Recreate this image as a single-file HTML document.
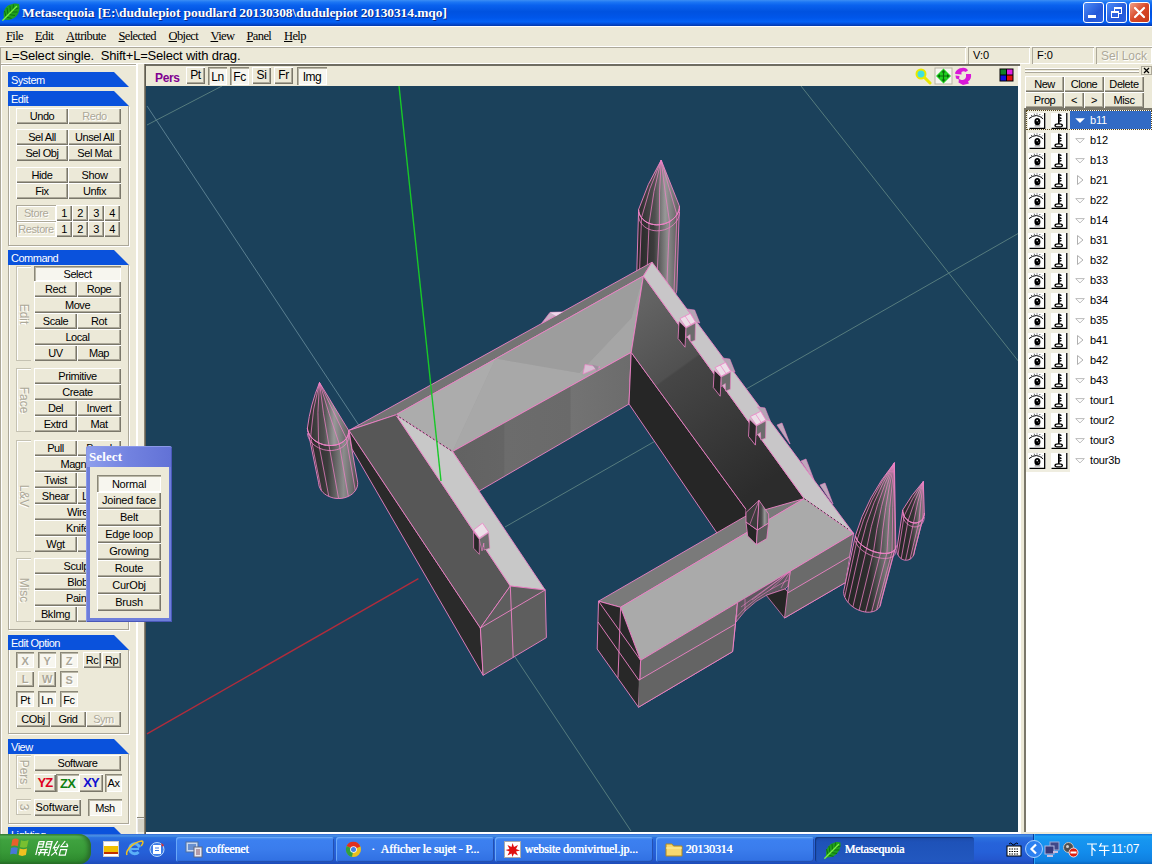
<!DOCTYPE html>
<html><head><meta charset="utf-8"><title>Metasequoia</title>
<style>
*{box-sizing:border-box;margin:0;padding:0}
html,body{width:1152px;height:864px;overflow:hidden;background:#ECE9D8;font-family:"Liberation Sans",sans-serif;font-size:11px;color:#000}
.a{position:absolute}
.b{position:absolute;background:#ECE9D8;text-align:center;white-space:nowrap;overflow:hidden;font-size:11px;line-height:16.5px;letter-spacing:-0.42px;
 box-shadow:inset 1px 1px 0 #fff,inset -1px -1px 0 #7a776a,inset -2px -2px 0 #aca899}
.b.p{background:#F7F6EF;box-shadow:inset 1px 1px 0 #8a8778,inset 2px 2px 0 #b9b6a6,inset -1px -1px 0 #fff;line-height:17px}
.b.pd{background:#F7F6EF;box-shadow:inset 1px 1px 0 #8a8778,inset 2px 2px 0 #b9b6a6,inset -1px -1px 0 #fff;color:#aca899;text-shadow:1px 1px 0 #fff;font-weight:bold;line-height:19px}
.b.d{color:#aca899;text-shadow:1px 1px 0 #fff}
.b.f{box-shadow:inset 1px 1px 0 #aca899,inset -1px -1px 0 #fff,inset 2px 2px 0 #fff;color:#aca899;text-shadow:1px 1px 0 #fff}
.hd{position:absolute;left:8px;width:121px;height:15px;background:#0A52DC;color:#fff;font-size:11px;line-height:16px;padding-left:3px;letter-spacing:-0.5px;
 clip-path:polygon(0 0,106px 0,121px 15px,0 15px)}
.gb{position:absolute;left:8px;width:121px;border-left:1px solid #aca899;border-right:1px solid #aca899;border-bottom:1px solid #aca899;box-shadow:1px 1px 0 #fff, inset 1px 0 0 #fff}
.vt{position:absolute;width:15px;color:#aca899;font-size:12px;border:1px solid #c5c2b2;border-right:none;box-shadow:inset 1px 1px 0 #fff;}
.vt span{position:absolute;left:50%;top:50%;transform:translate(-50%,-50%) rotate(90deg);white-space:nowrap;text-shadow:1px 1px 0 #fff}
.m{position:absolute;top:29px;font-family:"Liberation Serif",serif;font-size:12.5px;line-height:14px;letter-spacing:-0.62px}
.m u{text-decoration:underline}
</style></head><body>
<div class="a" style="left:0px;top:0px;width:1152px;height:26px;background:linear-gradient(#3C8EF4 0%,#1C76F4 8%,#0A62EE 20%,#0052E0 45%,#0056EA 68%,#0462F6 84%,#044AD2 93%,#0338A8 100%)"></div>
<div class="a" style="left:0px;top:26px;width:1152px;height:1px;background:#fff"></div>
<svg class="a" style="left:2px;top:3px" width="18" height="18" viewBox="0 0 18 18"><path d="M2.500 16.500C0.500 11 1.500 5 7 2C10.500 0.500 14 0 17 1C18 5 17.500 10 14 13.500C11 16.500 6 17.500 2.500 16.500Z" fill="#1FA01F"/><g stroke="#0C6C0C" stroke-width="0.900" fill="none"><path d="M4 13.500L2.500 8M6 11.500L5 5M8.500 9L8 3M11 6.500L11.500 1.500M4.500 14L9.500 15.500M7 11.500L13 12.500M9.500 9L15.500 9M12 6.500L16.500 5"/></g><path d="M0.800 17.200L14.500 3.500" stroke="#7CF040" stroke-width="1.300" stroke-linecap="round"/></svg>
<div class="a" style="left:22px;top:4px;width:600px;height:17px;color:#fff;font-family:'Liberation Serif',serif;font-weight:bold;font-size:13.5px;line-height:17px;white-space:nowrap;text-shadow:1px 1px 0 #0A2A8A;letter-spacing:-0.1px">Metasequoia [E:\dudulepiot poudlard 20130308\dudulepiot 20130314.mqo]</div>
<div class="a" style="left:1083px;top:2px;width:21px;height:21px;border-radius:3px;border:1px solid #fff;background:linear-gradient(135deg,#4C8CF8,#2458D8 60%,#2A60E0)"><div class="a" style="left:4px;top:12px;width:8px;height:3px;background:#fff"></div></div>
<div class="a" style="left:1106px;top:2px;width:21px;height:21px;border-radius:3px;border:1px solid #fff;background:linear-gradient(135deg,#4C8CF8,#2458D8 60%,#2A60E0)"><div class="a" style="left:7px;top:4px;width:8px;height:7px;border:1px solid #fff;border-top-width:2px"></div><div class="a" style="left:4px;top:8px;width:8px;height:7px;border:1px solid #fff;border-top-width:2px;background:#2C62E0"></div></div>
<div class="a" style="left:1129px;top:2px;width:21px;height:21px;border-radius:3px;border:1px solid #fff;background:linear-gradient(135deg,#F0A088,#D84828 50%,#C83818)"><svg class="a" style="left:0;top:0" width="19" height="19"><path d="M5 5L14 14M14 5L5 14" stroke="#fff" stroke-width="2.2" stroke-linecap="round"/></svg></div>
<div class="m" style="left:6px"><u>F</u>ile</div>
<div class="m" style="left:35px"><u>E</u>dit</div>
<div class="m" style="left:66px"><u>A</u>ttribute</div>
<div class="m" style="left:118.5px"><u>S</u>elected</div>
<div class="m" style="left:168.5px"><u>O</u>bject</div>
<div class="m" style="left:210.5px"><u>V</u>iew</div>
<div class="m" style="left:246.5px"><u>P</u>anel</div>
<div class="m" style="left:284px"><u>H</u>elp</div>
<div class="a" style="left:0px;top:46px;width:1152px;height:1px;background:#fff"></div>
<div class="a" style="left:0px;top:47px;width:966px;height:17px;box-shadow:inset 1px 1px 0 #aca899,inset -1px -1px 0 #fff;font-size:13px;line-height:17px;padding-left:5px;white-space:nowrap;letter-spacing:-0.2px">L=Select single.&nbsp; Shift+L=Select with drag.</div>
<div class="a" style="left:968px;top:47px;width:62px;height:17px;box-shadow:inset 1px 1px 0 #aca899,inset -1px -1px 0 #fff;font-size:11px;line-height:17px;padding-left:5px">V:0</div>
<div class="a" style="left:1032px;top:47px;width:62px;height:17px;box-shadow:inset 1px 1px 0 #aca899,inset -1px -1px 0 #fff;font-size:11px;line-height:17px;padding-left:5px">F:0</div>
<div class="a" style="left:1096px;top:47px;width:56px;height:17px;box-shadow:inset 1px 1px 0 #aca899,inset -1px -1px 0 #fff;font-size:12px;line-height:18px;padding-left:5px;color:#aca899;text-shadow:1px 1px 0 #fff;white-space:nowrap">Sel Lock</div>
<div class="a" style="left:0px;top:64px;width:137px;height:770px;box-shadow:inset 1px 1px 0 #aca899, inset 2px 2px 0 #fff"></div>
<div class="a" style="left:136px;top:64px;width:2px;height:770px;background:#fff"></div>
<div class="a" style="left:138px;top:64px;width:6px;height:770px;background:#EEEBDD"></div>
<div class="hd" style="top:72px">System</div>
<div class="hd" style="top:91px">Edit</div>
<div class="gb" style="top:106px;height:140px"></div>
<div class="b " style="left:16px;top:108px;width:52px;height:16px;">Undo</div>
<div class="b d" style="left:68px;top:108px;width:53px;height:16px;">Redo</div>
<div class="b " style="left:16px;top:129px;width:52px;height:16px;">Sel All</div>
<div class="b " style="left:68px;top:129px;width:53px;height:16px;">Unsel All</div>
<div class="b " style="left:16px;top:145px;width:52px;height:16px;">Sel Obj</div>
<div class="b " style="left:68px;top:145px;width:53px;height:16px;">Sel Mat</div>
<div class="b " style="left:16px;top:167px;width:52px;height:16px;">Hide</div>
<div class="b " style="left:68px;top:167px;width:53px;height:16px;">Show</div>
<div class="b " style="left:16px;top:183px;width:52px;height:16px;">Fix</div>
<div class="b " style="left:68px;top:183px;width:53px;height:16px;">Unfix</div>
<div class="b f" style="left:16px;top:205px;width:40px;height:16px;">Store</div>
<div class="b f" style="left:16px;top:221px;width:40px;height:16px;">Restore</div>
<div class="b " style="left:56px;top:205px;width:16px;height:16px;">1</div>
<div class="b " style="left:56px;top:221px;width:16px;height:16px;">1</div>
<div class="b " style="left:72px;top:205px;width:16px;height:16px;">2</div>
<div class="b " style="left:72px;top:221px;width:16px;height:16px;">2</div>
<div class="b " style="left:88px;top:205px;width:16px;height:16px;">3</div>
<div class="b " style="left:88px;top:221px;width:16px;height:16px;">3</div>
<div class="b " style="left:104px;top:205px;width:16px;height:16px;">4</div>
<div class="b " style="left:104px;top:221px;width:16px;height:16px;">4</div>
<div class="hd" style="top:250px">Command</div>
<div class="gb" style="top:265px;height:365px"></div>
<div class="vt" style="left:16px;top:266px;height:95px"><span>Edit</span></div>
<div class="b p" style="left:34px;top:266px;width:87px;height:15px;line-height:17px">Select</div>
<div class="b " style="left:34px;top:281px;width:43px;height:16px;">Rect</div>
<div class="b " style="left:77px;top:281px;width:44px;height:16px;">Rope</div>
<div class="b " style="left:34px;top:297px;width:87px;height:16px;">Move</div>
<div class="b " style="left:34px;top:313px;width:43px;height:16px;">Scale</div>
<div class="b " style="left:77px;top:313px;width:44px;height:16px;">Rot</div>
<div class="b " style="left:34px;top:329px;width:87px;height:16px;">Local</div>
<div class="b " style="left:34px;top:345px;width:43px;height:16px;">UV</div>
<div class="b " style="left:77px;top:345px;width:44px;height:16px;">Map</div>
<div class="vt" style="left:16px;top:368px;height:64px"><span>Face</span></div>
<div class="b " style="left:34px;top:368px;width:87px;height:16px;">Primitive</div>
<div class="b " style="left:34px;top:384px;width:87px;height:16px;">Create</div>
<div class="b " style="left:34px;top:400px;width:43px;height:16px;">Del</div>
<div class="b " style="left:77px;top:400px;width:44px;height:16px;">Invert</div>
<div class="b " style="left:34px;top:416px;width:43px;height:16px;">Extrd</div>
<div class="b " style="left:77px;top:416px;width:44px;height:16px;">Mat</div>
<div class="vt" style="left:16px;top:440px;height:112px"><span>L&amp;V</span></div>
<div class="b " style="left:34px;top:440px;width:43px;height:16px;">Pull</div>
<div class="b " style="left:77px;top:440px;width:44px;height:16px;">Bevel</div>
<div class="b " style="left:34px;top:456px;width:87px;height:16px;">Magnet</div>
<div class="b " style="left:34px;top:472px;width:43px;height:16px;">Twist</div>
<div class="b " style="left:77px;top:472px;width:44px;height:16px;"></div>
<div class="b " style="left:34px;top:488px;width:43px;height:16px;">Shear</div>
<div class="b " style="left:77px;top:488px;width:44px;height:16px;text-align:left;padding-left:5px">Lathe</div>
<div class="b " style="left:34px;top:504px;width:87px;height:16px;">Wire</div>
<div class="b " style="left:34px;top:520px;width:87px;height:16px;">Knife</div>
<div class="b " style="left:34px;top:536px;width:43px;height:16px;">Wgt</div>
<div class="b " style="left:77px;top:536px;width:44px;height:16px;"></div>
<div class="vt" style="left:16px;top:558px;height:64px"><span>Misc</span></div>
<div class="b " style="left:34px;top:558px;width:87px;height:16px;">Sculpt</div>
<div class="b " style="left:34px;top:574px;width:87px;height:16px;">Blob</div>
<div class="b " style="left:34px;top:590px;width:87px;height:16px;">Paint</div>
<div class="b " style="left:34px;top:606px;width:43px;height:16px;">BkImg</div>
<div class="b " style="left:77px;top:606px;width:44px;height:16px;"></div>
<div class="hd" style="top:635px">Edit Option</div>
<div class="gb" style="top:650px;height:84px"></div>
<div class="b pd" style="left:16px;top:652px;width:18px;height:16px;">X</div>
<div class="b pd" style="left:38px;top:652px;width:18px;height:16px;">Y</div>
<div class="b pd" style="left:60px;top:652px;width:18px;height:16px;">Z</div>
<div class="b " style="left:83px;top:652px;width:18px;height:16px;">Rc</div>
<div class="b " style="left:102px;top:652px;width:19px;height:16px;">Rp</div>
<div class="b d" style="left:16px;top:671px;width:18px;height:16px;font-weight:bold">L</div>
<div class="b d" style="left:38px;top:671px;width:18px;height:16px;font-weight:bold">W</div>
<div class="b pd" style="left:60px;top:671px;width:18px;height:16px;">S</div>
<div class="b p" style="left:16px;top:691px;width:18px;height:16px;line-height:19px">Pt</div>
<div class="b p" style="left:38px;top:691px;width:18px;height:16px;line-height:19px">Ln</div>
<div class="b p" style="left:60px;top:691px;width:18px;height:16px;line-height:19px">Fc</div>
<div class="b " style="left:16px;top:711px;width:34px;height:16px;">CObj</div>
<div class="b " style="left:50px;top:711px;width:36px;height:16px;">Grid</div>
<div class="b d" style="left:86px;top:711px;width:35px;height:16px;">Sym</div>
<div class="hd" style="top:739px">View</div>
<div class="gb" style="top:754px;height:70px"></div>
<div class="vt" style="left:16px;top:755px;height:34px"><span>Pers</span></div>
<div class="b " style="left:34px;top:755px;width:87px;height:16px;">Software</div>
<div class="b " style="left:34px;top:774px;width:22px;height:18px;color:#E00020;font-weight:bold;font-size:13px;line-height:17px;letter-spacing:-0.9px">YZ</div>
<div class="b p" style="left:56px;top:774px;width:23px;height:18px;color:#108010;font-weight:bold;font-size:13px;line-height:20px;letter-spacing:-0.9px">ZX</div>
<div class="b " style="left:79px;top:774px;width:24px;height:18px;color:#1010D0;font-weight:bold;font-size:13px;line-height:17px;letter-spacing:-0.9px">XY</div>
<div class="b p" style="left:105px;top:774px;width:17px;height:18px;line-height:19px">Ax</div>
<div class="vt" style="left:16px;top:799px;height:16px"><span>3</span></div>
<div class="b " style="left:34px;top:799px;width:47px;height:17px;line-height:16px;letter-spacing:-0.05px;text-indent:-1px">Software</div>
<div class="b p" style="left:88px;top:799px;width:34px;height:17px;line-height:19px">Msh</div>
<div class="hd" style="top:827px">Lighting</div>
<div class="a" style="left:137px;top:817px;width:9px;height:15px;background:#D6D3C6;box-shadow:inset 0 1px 0 #8a8778,inset 1px 2px 0 #eee"></div>
<div class="a" style="left:144px;top:64px;width:1px;height:770px;background:#8a8474"></div>
<div class="a" style="left:145px;top:64px;width:1px;height:770px;background:#5e5c52"></div>
<div class="a" style="left:146px;top:64px;width:874px;height:2px;background:#6f6d62"></div>
<div class="a" style="left:146px;top:66px;width:872px;height:20px;background:#ECE9D8"></div>
<div class="a" style="left:1018px;top:66px;width:3px;height:768px;background:#fff"></div>
<div class="a" style="left:146px;top:832px;width:1006px;height:2px;background:#fff"></div>
<div class="a" style="left:155px;top:70.5px;width:30px;height:14px;color:#800090;font-weight:bold;font-size:12px;line-height:15px;letter-spacing:-0.35px">Pers</div>
<div class="b " style="left:186px;top:67px;width:19px;height:17px;font-size:12px;line-height:17.500px">Pt</div>
<div class="b p" style="left:208px;top:67px;width:19px;height:18px;font-size:12px;line-height:21.500px">Ln</div>
<div class="b p" style="left:230px;top:67px;width:19px;height:18px;font-size:12px;line-height:21.500px">Fc</div>
<div class="b " style="left:252px;top:67px;width:19px;height:17px;font-size:12px;line-height:17.500px">Si</div>
<div class="b " style="left:274px;top:67px;width:19px;height:17px;font-size:12px;line-height:17.500px">Fr</div>
<div class="b p" style="left:297px;top:67px;width:30px;height:18px;font-size:12px;line-height:21.500px">Img</div>
<svg class="a" style="left:914px;top:67px" width="104" height="18" viewBox="0 0 104 18">
<circle cx="7" cy="7" r="4.5" fill="#40E0E0" stroke="#E8E800" stroke-width="2"/><path d="M10.5 10.5L16 16" stroke="#E8E800" stroke-width="3" stroke-linecap="round"/>
<rect x="21" y="1" width="17" height="16" fill="#F7F6EF" stroke="#b9b6a6" stroke-width="1"/>
<path d="M29.5 1.5L37 9L29.5 16.5L22 9Z" fill="#20D020"/><path d="M29.5 4v10M24.5 9h10" stroke="#0A6A0A" stroke-width="1.2"/><path d="M29.5 3l-2 2.5h4zM29.5 15l-2-2.5h4zM23.5 9l2.5-2v4zM35.5 9l-2.5-2v4z" fill="#0A6A0A"/>
<g transform="translate(49,9.500)"><path d="M-1 -8.500C2 -9 4 -8 5 -6L2.500 -4.500C1.500 -5.500 0 -5.500 -1.500 -4.500L-1.500 -2L-7.500 -2.500L-8 -3.500C-7 -6.500 -4 -8.500 -1 -8.500Z" fill="#D818D8"/><path d="M3 -2.500L8 -2.500C8.500 1 7.500 3.500 5 5L6 7L0 8.500L-4.500 6L-4 2.500L-1.500 3.500C0.500 4 2.500 2.500 3 0.500Z" fill="#D818D8"/><path d="M-7.500 -1L-3.500 -0.500L-4 3L-7 2Z" fill="#D818D8"/></g>
<rect x="85.500" y="1.500" width="14" height="13" fill="#000"/><rect x="86.500" y="2.500" width="5.500" height="5" fill="#108028"/><rect x="93" y="2.500" width="5.500" height="5" fill="#E020E0"/><rect x="86.500" y="8.500" width="5.500" height="5" fill="#1010E0"/><rect x="93" y="8.500" width="5.500" height="5" fill="#E01010"/>
</svg>
<div class="a" style="left:1021px;top:64px;width:131px;height:770px;background:#ECE9D8"></div>
<div class="a" style="left:1025px;top:68px;width:114px;height:1px;background:#fff"></div>
<div class="a" style="left:1025px;top:69px;width:114px;height:1px;background:#aca899"></div>
<div class="a" style="left:1025px;top:71px;width:114px;height:1px;background:#fff"></div>
<div class="a" style="left:1025px;top:72px;width:114px;height:1px;background:#aca899"></div>
<svg class="a" style="left:1141px;top:66px" width="11" height="9"><rect x="0.5" y="0.5" width="10" height="8" fill="#ECE9D8" stroke="#aca899"/><path d="M3 2L8 7M8 2L3 7" stroke="#000" stroke-width="1.2"/></svg>
<div class="b " style="left:1025px;top:76px;width:39px;height:16px;font-size:11px;line-height:17px">New</div>
<div class="b " style="left:1064px;top:76px;width:40px;height:16px;font-size:11px;line-height:17px">Clone</div>
<div class="b " style="left:1104px;top:76px;width:40px;height:16px;font-size:11px;line-height:17px">Delete</div>
<div class="b " style="left:1025px;top:92px;width:39px;height:16px;font-size:11px;line-height:17px">Prop</div>
<div class="b " style="left:1064px;top:92px;width:20px;height:16px;font-size:11px;line-height:17px">&lt;</div>
<div class="b " style="left:1084px;top:92px;width:20px;height:16px;font-size:11px;line-height:17px">&gt;</div>
<div class="b " style="left:1104px;top:92px;width:40px;height:16px;font-size:11px;line-height:17px">Misc</div>
<div class="a" style="left:1024px;top:108px;width:128px;height:724px;background:#fff;box-shadow:inset 2px 2px 0 #7a776a"></div>
<div class="a" style="left:1026px;top:110px;width:44px;height:362px;background:#EFEDE0"></div>
<div class="a" style="left:1070px;top:111px;width:81px;height:18px;background:#316AC5"></div>
<div class="a" style="left:1026px;top:110px;width:126px;height:20px;border:1px dotted #5a4a20"></div>
<svg class="a" style="left:1027.5px;top:112.6px" width="18" height="16" viewBox="0 0 18 16"><rect x="0" y="0" width="18" height="16" fill="#fff"/><path d="M16.700 0V15.300H1.500" stroke="#000" stroke-width="1.300" fill="none"/><path d="M1 5.600Q8.500 -0.600 15.200 5.900" stroke="#000" stroke-width="1" fill="none"/><path d="M3.800 2.900L3.100 1.900M6.500 1.800L6.200 0.700M9 1.500V0.400M11.600 2L12.100 1M13.800 3.400L14.600 2.600" stroke="#000" stroke-width="0.700"/><ellipse cx="9.400" cy="8.700" rx="3" ry="3.600" fill="#000"/><rect x="8.500" y="6.800" width="1.400" height="1.400" fill="#fff"/><rect x="10.200" y="8.800" width="0.900" height="0.900" fill="#888"/><path d="M6.700 12.900H12.200" stroke="#555" stroke-width="0.800"/></svg>
<svg class="a" style="left:1050.5px;top:112.6px" width="17" height="16" viewBox="0 0 17 16"><rect x="0" y="0" width="17" height="16" fill="#fff"/><path d="M15.800 0V15.300H0.500" stroke="#000" stroke-width="1.300" fill="none"/><path d="M7.800 0.700V11.200" stroke="#000" stroke-width="1.600"/><path d="M8.400 0.800L11.200 2.200L8.400 3.600ZM8.400 3.800L11.200 5.200L8.400 6.600ZM8.400 6.600L11.200 7.800L8.400 9Z" fill="#000"/><ellipse cx="7.700" cy="12.400" rx="3.700" ry="1.500" fill="#fff" stroke="#000" stroke-width="1.300"/></svg>
<svg class="a" style="left:1074.500px;top:118px" width="11" height="7"><path d="M0.300 0.300H9.900L5 4.900Z" fill="#fff"/></svg>
<div class="a" style="left:1090px;top:113px;width:60px;height:14px;color:#fff;font-size:11px;line-height:14px;white-space:nowrap;letter-spacing:-0.15px">b11</div>
<svg class="a" style="left:1027.5px;top:132.6px" width="18" height="16" viewBox="0 0 18 16"><rect x="0" y="0" width="18" height="16" fill="#fff"/><path d="M16.700 0V15.300H1.500" stroke="#000" stroke-width="1.300" fill="none"/><path d="M1 5.600Q8.500 -0.600 15.200 5.900" stroke="#000" stroke-width="1" fill="none"/><path d="M3.800 2.900L3.100 1.900M6.500 1.800L6.200 0.700M9 1.500V0.400M11.600 2L12.100 1M13.800 3.400L14.600 2.600" stroke="#000" stroke-width="0.700"/><ellipse cx="9.400" cy="8.700" rx="3" ry="3.600" fill="#000"/><rect x="8.500" y="6.800" width="1.400" height="1.400" fill="#fff"/><rect x="10.200" y="8.800" width="0.900" height="0.900" fill="#888"/><path d="M6.700 12.900H12.200" stroke="#555" stroke-width="0.800"/></svg>
<svg class="a" style="left:1050.5px;top:132.6px" width="17" height="16" viewBox="0 0 17 16"><rect x="0" y="0" width="17" height="16" fill="#fff"/><path d="M15.800 0V15.300H0.500" stroke="#000" stroke-width="1.300" fill="none"/><path d="M7.800 0.700V11.200" stroke="#000" stroke-width="1.600"/><path d="M8.400 0.800L11.200 2.200L8.400 3.600ZM8.400 3.800L11.200 5.200L8.400 6.600ZM8.400 6.600L11.200 7.800L8.400 9Z" fill="#000"/><ellipse cx="7.700" cy="12.400" rx="3.700" ry="1.500" fill="#fff" stroke="#000" stroke-width="1.300"/></svg>
<svg class="a" style="left:1074.500px;top:137.5px" width="11" height="7"><path d="M0.700 0.600H9.300L5 4.900Z" fill="#fff" stroke="#b4b4b4" stroke-width="0.900"/></svg>
<div class="a" style="left:1090px;top:133px;width:60px;height:14px;color:#000;font-size:11px;line-height:14px;white-space:nowrap;letter-spacing:-0.15px">b12</div>
<svg class="a" style="left:1027.5px;top:152.6px" width="18" height="16" viewBox="0 0 18 16"><rect x="0" y="0" width="18" height="16" fill="#fff"/><path d="M16.700 0V15.300H1.500" stroke="#000" stroke-width="1.300" fill="none"/><path d="M1 5.600Q8.500 -0.600 15.200 5.900" stroke="#000" stroke-width="1" fill="none"/><path d="M3.800 2.900L3.100 1.900M6.500 1.800L6.200 0.700M9 1.500V0.400M11.600 2L12.100 1M13.800 3.400L14.600 2.600" stroke="#000" stroke-width="0.700"/><ellipse cx="9.400" cy="8.700" rx="3" ry="3.600" fill="#000"/><rect x="8.500" y="6.800" width="1.400" height="1.400" fill="#fff"/><rect x="10.200" y="8.800" width="0.900" height="0.900" fill="#888"/><path d="M6.700 12.900H12.200" stroke="#555" stroke-width="0.800"/></svg>
<svg class="a" style="left:1050.5px;top:152.6px" width="17" height="16" viewBox="0 0 17 16"><rect x="0" y="0" width="17" height="16" fill="#fff"/><path d="M15.800 0V15.300H0.500" stroke="#000" stroke-width="1.300" fill="none"/><path d="M7.800 0.700V11.200" stroke="#000" stroke-width="1.600"/><path d="M8.400 0.800L11.200 2.200L8.400 3.600ZM8.400 3.800L11.200 5.200L8.400 6.600ZM8.400 6.600L11.200 7.800L8.400 9Z" fill="#000"/><ellipse cx="7.700" cy="12.400" rx="3.700" ry="1.500" fill="#fff" stroke="#000" stroke-width="1.300"/></svg>
<svg class="a" style="left:1074.500px;top:157.5px" width="11" height="7"><path d="M0.700 0.600H9.300L5 4.900Z" fill="#fff" stroke="#b4b4b4" stroke-width="0.900"/></svg>
<div class="a" style="left:1090px;top:153px;width:60px;height:14px;color:#000;font-size:11px;line-height:14px;white-space:nowrap;letter-spacing:-0.15px">b13</div>
<svg class="a" style="left:1027.5px;top:172.6px" width="18" height="16" viewBox="0 0 18 16"><rect x="0" y="0" width="18" height="16" fill="#fff"/><path d="M16.700 0V15.300H1.500" stroke="#000" stroke-width="1.300" fill="none"/><path d="M1 5.600Q8.500 -0.600 15.200 5.900" stroke="#000" stroke-width="1" fill="none"/><path d="M3.800 2.900L3.100 1.900M6.500 1.800L6.200 0.700M9 1.500V0.400M11.600 2L12.100 1M13.800 3.400L14.600 2.600" stroke="#000" stroke-width="0.700"/><ellipse cx="9.400" cy="8.700" rx="3" ry="3.600" fill="#000"/><rect x="8.500" y="6.800" width="1.400" height="1.400" fill="#fff"/><rect x="10.200" y="8.800" width="0.900" height="0.900" fill="#888"/><path d="M6.700 12.900H12.200" stroke="#555" stroke-width="0.800"/></svg>
<svg class="a" style="left:1050.5px;top:172.6px" width="17" height="16" viewBox="0 0 17 16"><rect x="0" y="0" width="17" height="16" fill="#fff"/><path d="M15.800 0V15.300H0.500" stroke="#000" stroke-width="1.300" fill="none"/><path d="M7.800 0.700V11.200" stroke="#000" stroke-width="1.600"/><path d="M8.400 0.800L11.200 2.200L8.400 3.600ZM8.400 3.800L11.200 5.200L8.400 6.600ZM8.400 6.600L11.200 7.800L8.400 9Z" fill="#000"/><ellipse cx="7.700" cy="12.400" rx="3.700" ry="1.500" fill="#fff" stroke="#000" stroke-width="1.300"/></svg>
<svg class="a" style="left:1077px;top:175px" width="7" height="10"><path d="M0.500 0.500V9.500L6 5Z" fill="#fff" stroke="#b0b0b0"/></svg>
<div class="a" style="left:1090px;top:173px;width:60px;height:14px;color:#000;font-size:11px;line-height:14px;white-space:nowrap;letter-spacing:-0.15px">b21</div>
<svg class="a" style="left:1027.5px;top:192.6px" width="18" height="16" viewBox="0 0 18 16"><rect x="0" y="0" width="18" height="16" fill="#fff"/><path d="M16.700 0V15.300H1.500" stroke="#000" stroke-width="1.300" fill="none"/><path d="M1 5.600Q8.500 -0.600 15.200 5.900" stroke="#000" stroke-width="1" fill="none"/><path d="M3.800 2.900L3.100 1.900M6.500 1.800L6.200 0.700M9 1.500V0.400M11.600 2L12.100 1M13.800 3.400L14.600 2.600" stroke="#000" stroke-width="0.700"/><ellipse cx="9.400" cy="8.700" rx="3" ry="3.600" fill="#000"/><rect x="8.500" y="6.800" width="1.400" height="1.400" fill="#fff"/><rect x="10.200" y="8.800" width="0.900" height="0.900" fill="#888"/><path d="M6.700 12.900H12.200" stroke="#555" stroke-width="0.800"/></svg>
<svg class="a" style="left:1050.5px;top:192.6px" width="17" height="16" viewBox="0 0 17 16"><rect x="0" y="0" width="17" height="16" fill="#fff"/><path d="M15.800 0V15.300H0.500" stroke="#000" stroke-width="1.300" fill="none"/><path d="M7.800 0.700V11.200" stroke="#000" stroke-width="1.600"/><path d="M8.400 0.800L11.200 2.200L8.400 3.600ZM8.400 3.800L11.200 5.200L8.400 6.600ZM8.400 6.600L11.200 7.800L8.400 9Z" fill="#000"/><ellipse cx="7.700" cy="12.400" rx="3.700" ry="1.500" fill="#fff" stroke="#000" stroke-width="1.300"/></svg>
<svg class="a" style="left:1074.500px;top:197.5px" width="11" height="7"><path d="M0.700 0.600H9.300L5 4.900Z" fill="#fff" stroke="#b4b4b4" stroke-width="0.900"/></svg>
<div class="a" style="left:1090px;top:193px;width:60px;height:14px;color:#000;font-size:11px;line-height:14px;white-space:nowrap;letter-spacing:-0.15px">b22</div>
<svg class="a" style="left:1027.5px;top:212.6px" width="18" height="16" viewBox="0 0 18 16"><rect x="0" y="0" width="18" height="16" fill="#fff"/><path d="M16.700 0V15.300H1.500" stroke="#000" stroke-width="1.300" fill="none"/><path d="M1 5.600Q8.500 -0.600 15.200 5.900" stroke="#000" stroke-width="1" fill="none"/><path d="M3.800 2.900L3.100 1.900M6.500 1.800L6.200 0.700M9 1.500V0.400M11.600 2L12.100 1M13.800 3.400L14.600 2.600" stroke="#000" stroke-width="0.700"/><ellipse cx="9.400" cy="8.700" rx="3" ry="3.600" fill="#000"/><rect x="8.500" y="6.800" width="1.400" height="1.400" fill="#fff"/><rect x="10.200" y="8.800" width="0.900" height="0.900" fill="#888"/><path d="M6.700 12.900H12.200" stroke="#555" stroke-width="0.800"/></svg>
<svg class="a" style="left:1050.5px;top:212.6px" width="17" height="16" viewBox="0 0 17 16"><rect x="0" y="0" width="17" height="16" fill="#fff"/><path d="M15.800 0V15.300H0.500" stroke="#000" stroke-width="1.300" fill="none"/><path d="M7.800 0.700V11.200" stroke="#000" stroke-width="1.600"/><path d="M8.400 0.800L11.200 2.200L8.400 3.600ZM8.400 3.800L11.200 5.200L8.400 6.600ZM8.400 6.600L11.200 7.800L8.400 9Z" fill="#000"/><ellipse cx="7.700" cy="12.400" rx="3.700" ry="1.500" fill="#fff" stroke="#000" stroke-width="1.300"/></svg>
<svg class="a" style="left:1074.500px;top:217.5px" width="11" height="7"><path d="M0.700 0.600H9.300L5 4.900Z" fill="#fff" stroke="#b4b4b4" stroke-width="0.900"/></svg>
<div class="a" style="left:1090px;top:213px;width:60px;height:14px;color:#000;font-size:11px;line-height:14px;white-space:nowrap;letter-spacing:-0.15px">b14</div>
<svg class="a" style="left:1027.5px;top:232.6px" width="18" height="16" viewBox="0 0 18 16"><rect x="0" y="0" width="18" height="16" fill="#fff"/><path d="M16.700 0V15.300H1.500" stroke="#000" stroke-width="1.300" fill="none"/><path d="M1 5.600Q8.500 -0.600 15.200 5.900" stroke="#000" stroke-width="1" fill="none"/><path d="M3.800 2.900L3.100 1.900M6.500 1.800L6.200 0.700M9 1.500V0.400M11.600 2L12.100 1M13.800 3.400L14.600 2.600" stroke="#000" stroke-width="0.700"/><ellipse cx="9.400" cy="8.700" rx="3" ry="3.600" fill="#000"/><rect x="8.500" y="6.800" width="1.400" height="1.400" fill="#fff"/><rect x="10.200" y="8.800" width="0.900" height="0.900" fill="#888"/><path d="M6.700 12.900H12.200" stroke="#555" stroke-width="0.800"/></svg>
<svg class="a" style="left:1050.5px;top:232.6px" width="17" height="16" viewBox="0 0 17 16"><rect x="0" y="0" width="17" height="16" fill="#fff"/><path d="M15.800 0V15.300H0.500" stroke="#000" stroke-width="1.300" fill="none"/><path d="M7.800 0.700V11.200" stroke="#000" stroke-width="1.600"/><path d="M8.400 0.800L11.200 2.200L8.400 3.600ZM8.400 3.800L11.200 5.200L8.400 6.600ZM8.400 6.600L11.200 7.800L8.400 9Z" fill="#000"/><ellipse cx="7.700" cy="12.400" rx="3.700" ry="1.500" fill="#fff" stroke="#000" stroke-width="1.300"/></svg>
<svg class="a" style="left:1077px;top:235px" width="7" height="10"><path d="M0.500 0.500V9.500L6 5Z" fill="#fff" stroke="#b0b0b0"/></svg>
<div class="a" style="left:1090px;top:233px;width:60px;height:14px;color:#000;font-size:11px;line-height:14px;white-space:nowrap;letter-spacing:-0.15px">b31</div>
<svg class="a" style="left:1027.5px;top:252.6px" width="18" height="16" viewBox="0 0 18 16"><rect x="0" y="0" width="18" height="16" fill="#fff"/><path d="M16.700 0V15.300H1.500" stroke="#000" stroke-width="1.300" fill="none"/><path d="M1 5.600Q8.500 -0.600 15.200 5.900" stroke="#000" stroke-width="1" fill="none"/><path d="M3.800 2.900L3.100 1.900M6.500 1.800L6.200 0.700M9 1.500V0.400M11.600 2L12.100 1M13.800 3.400L14.600 2.600" stroke="#000" stroke-width="0.700"/><ellipse cx="9.400" cy="8.700" rx="3" ry="3.600" fill="#000"/><rect x="8.500" y="6.800" width="1.400" height="1.400" fill="#fff"/><rect x="10.200" y="8.800" width="0.900" height="0.900" fill="#888"/><path d="M6.700 12.900H12.200" stroke="#555" stroke-width="0.800"/></svg>
<svg class="a" style="left:1050.5px;top:252.6px" width="17" height="16" viewBox="0 0 17 16"><rect x="0" y="0" width="17" height="16" fill="#fff"/><path d="M15.800 0V15.300H0.500" stroke="#000" stroke-width="1.300" fill="none"/><path d="M7.800 0.700V11.200" stroke="#000" stroke-width="1.600"/><path d="M8.400 0.800L11.200 2.200L8.400 3.600ZM8.400 3.800L11.200 5.200L8.400 6.600ZM8.400 6.600L11.200 7.800L8.400 9Z" fill="#000"/><ellipse cx="7.700" cy="12.400" rx="3.700" ry="1.500" fill="#fff" stroke="#000" stroke-width="1.300"/></svg>
<svg class="a" style="left:1077px;top:255px" width="7" height="10"><path d="M0.500 0.500V9.500L6 5Z" fill="#fff" stroke="#b0b0b0"/></svg>
<div class="a" style="left:1090px;top:253px;width:60px;height:14px;color:#000;font-size:11px;line-height:14px;white-space:nowrap;letter-spacing:-0.15px">b32</div>
<svg class="a" style="left:1027.5px;top:272.6px" width="18" height="16" viewBox="0 0 18 16"><rect x="0" y="0" width="18" height="16" fill="#fff"/><path d="M16.700 0V15.300H1.500" stroke="#000" stroke-width="1.300" fill="none"/><path d="M1 5.600Q8.500 -0.600 15.200 5.900" stroke="#000" stroke-width="1" fill="none"/><path d="M3.800 2.900L3.100 1.900M6.500 1.800L6.200 0.700M9 1.500V0.400M11.600 2L12.100 1M13.800 3.400L14.600 2.600" stroke="#000" stroke-width="0.700"/><ellipse cx="9.400" cy="8.700" rx="3" ry="3.600" fill="#000"/><rect x="8.500" y="6.800" width="1.400" height="1.400" fill="#fff"/><rect x="10.200" y="8.800" width="0.900" height="0.900" fill="#888"/><path d="M6.700 12.900H12.200" stroke="#555" stroke-width="0.800"/></svg>
<svg class="a" style="left:1050.5px;top:272.6px" width="17" height="16" viewBox="0 0 17 16"><rect x="0" y="0" width="17" height="16" fill="#fff"/><path d="M15.800 0V15.300H0.500" stroke="#000" stroke-width="1.300" fill="none"/><path d="M7.800 0.700V11.200" stroke="#000" stroke-width="1.600"/><path d="M8.400 0.800L11.200 2.200L8.400 3.600ZM8.400 3.800L11.200 5.200L8.400 6.600ZM8.400 6.600L11.200 7.800L8.400 9Z" fill="#000"/><ellipse cx="7.700" cy="12.400" rx="3.700" ry="1.500" fill="#fff" stroke="#000" stroke-width="1.300"/></svg>
<svg class="a" style="left:1074.500px;top:277.5px" width="11" height="7"><path d="M0.700 0.600H9.300L5 4.900Z" fill="#fff" stroke="#b4b4b4" stroke-width="0.900"/></svg>
<div class="a" style="left:1090px;top:273px;width:60px;height:14px;color:#000;font-size:11px;line-height:14px;white-space:nowrap;letter-spacing:-0.15px">b33</div>
<svg class="a" style="left:1027.5px;top:292.6px" width="18" height="16" viewBox="0 0 18 16"><rect x="0" y="0" width="18" height="16" fill="#fff"/><path d="M16.700 0V15.300H1.500" stroke="#000" stroke-width="1.300" fill="none"/><path d="M1 5.600Q8.500 -0.600 15.200 5.900" stroke="#000" stroke-width="1" fill="none"/><path d="M3.800 2.900L3.100 1.900M6.500 1.800L6.200 0.700M9 1.500V0.400M11.600 2L12.100 1M13.800 3.400L14.600 2.600" stroke="#000" stroke-width="0.700"/><ellipse cx="9.400" cy="8.700" rx="3" ry="3.600" fill="#000"/><rect x="8.500" y="6.800" width="1.400" height="1.400" fill="#fff"/><rect x="10.200" y="8.800" width="0.900" height="0.900" fill="#888"/><path d="M6.700 12.900H12.200" stroke="#555" stroke-width="0.800"/></svg>
<svg class="a" style="left:1050.5px;top:292.6px" width="17" height="16" viewBox="0 0 17 16"><rect x="0" y="0" width="17" height="16" fill="#fff"/><path d="M15.800 0V15.300H0.500" stroke="#000" stroke-width="1.300" fill="none"/><path d="M7.800 0.700V11.200" stroke="#000" stroke-width="1.600"/><path d="M8.400 0.800L11.200 2.200L8.400 3.600ZM8.400 3.800L11.200 5.200L8.400 6.600ZM8.400 6.600L11.200 7.800L8.400 9Z" fill="#000"/><ellipse cx="7.700" cy="12.400" rx="3.700" ry="1.500" fill="#fff" stroke="#000" stroke-width="1.300"/></svg>
<svg class="a" style="left:1074.500px;top:297.5px" width="11" height="7"><path d="M0.700 0.600H9.300L5 4.900Z" fill="#fff" stroke="#b4b4b4" stroke-width="0.900"/></svg>
<div class="a" style="left:1090px;top:293px;width:60px;height:14px;color:#000;font-size:11px;line-height:14px;white-space:nowrap;letter-spacing:-0.15px">b34</div>
<svg class="a" style="left:1027.5px;top:312.6px" width="18" height="16" viewBox="0 0 18 16"><rect x="0" y="0" width="18" height="16" fill="#fff"/><path d="M16.700 0V15.300H1.500" stroke="#000" stroke-width="1.300" fill="none"/><path d="M1 5.600Q8.500 -0.600 15.200 5.900" stroke="#000" stroke-width="1" fill="none"/><path d="M3.800 2.900L3.100 1.900M6.500 1.800L6.200 0.700M9 1.500V0.400M11.600 2L12.100 1M13.800 3.400L14.600 2.600" stroke="#000" stroke-width="0.700"/><ellipse cx="9.400" cy="8.700" rx="3" ry="3.600" fill="#000"/><rect x="8.500" y="6.800" width="1.400" height="1.400" fill="#fff"/><rect x="10.200" y="8.800" width="0.900" height="0.900" fill="#888"/><path d="M6.700 12.900H12.200" stroke="#555" stroke-width="0.800"/></svg>
<svg class="a" style="left:1050.5px;top:312.6px" width="17" height="16" viewBox="0 0 17 16"><rect x="0" y="0" width="17" height="16" fill="#fff"/><path d="M15.800 0V15.300H0.500" stroke="#000" stroke-width="1.300" fill="none"/><path d="M7.800 0.700V11.200" stroke="#000" stroke-width="1.600"/><path d="M8.400 0.800L11.200 2.200L8.400 3.600ZM8.400 3.800L11.200 5.200L8.400 6.600ZM8.400 6.600L11.200 7.800L8.400 9Z" fill="#000"/><ellipse cx="7.700" cy="12.400" rx="3.700" ry="1.500" fill="#fff" stroke="#000" stroke-width="1.300"/></svg>
<svg class="a" style="left:1074.500px;top:317.5px" width="11" height="7"><path d="M0.700 0.600H9.300L5 4.900Z" fill="#fff" stroke="#b4b4b4" stroke-width="0.900"/></svg>
<div class="a" style="left:1090px;top:313px;width:60px;height:14px;color:#000;font-size:11px;line-height:14px;white-space:nowrap;letter-spacing:-0.15px">b35</div>
<svg class="a" style="left:1027.5px;top:332.6px" width="18" height="16" viewBox="0 0 18 16"><rect x="0" y="0" width="18" height="16" fill="#fff"/><path d="M16.700 0V15.300H1.500" stroke="#000" stroke-width="1.300" fill="none"/><path d="M1 5.600Q8.500 -0.600 15.200 5.900" stroke="#000" stroke-width="1" fill="none"/><path d="M3.800 2.900L3.100 1.900M6.500 1.800L6.200 0.700M9 1.500V0.400M11.600 2L12.100 1M13.800 3.400L14.600 2.600" stroke="#000" stroke-width="0.700"/><ellipse cx="9.400" cy="8.700" rx="3" ry="3.600" fill="#000"/><rect x="8.500" y="6.800" width="1.400" height="1.400" fill="#fff"/><rect x="10.200" y="8.800" width="0.900" height="0.900" fill="#888"/><path d="M6.700 12.900H12.200" stroke="#555" stroke-width="0.800"/></svg>
<svg class="a" style="left:1050.5px;top:332.6px" width="17" height="16" viewBox="0 0 17 16"><rect x="0" y="0" width="17" height="16" fill="#fff"/><path d="M15.800 0V15.300H0.500" stroke="#000" stroke-width="1.300" fill="none"/><path d="M7.800 0.700V11.200" stroke="#000" stroke-width="1.600"/><path d="M8.400 0.800L11.200 2.200L8.400 3.600ZM8.400 3.800L11.200 5.200L8.400 6.600ZM8.400 6.600L11.200 7.800L8.400 9Z" fill="#000"/><ellipse cx="7.700" cy="12.400" rx="3.700" ry="1.500" fill="#fff" stroke="#000" stroke-width="1.300"/></svg>
<svg class="a" style="left:1077px;top:335px" width="7" height="10"><path d="M0.500 0.500V9.500L6 5Z" fill="#fff" stroke="#b0b0b0"/></svg>
<div class="a" style="left:1090px;top:333px;width:60px;height:14px;color:#000;font-size:11px;line-height:14px;white-space:nowrap;letter-spacing:-0.15px">b41</div>
<svg class="a" style="left:1027.5px;top:352.6px" width="18" height="16" viewBox="0 0 18 16"><rect x="0" y="0" width="18" height="16" fill="#fff"/><path d="M16.700 0V15.300H1.500" stroke="#000" stroke-width="1.300" fill="none"/><path d="M1 5.600Q8.500 -0.600 15.200 5.900" stroke="#000" stroke-width="1" fill="none"/><path d="M3.800 2.900L3.100 1.900M6.500 1.800L6.200 0.700M9 1.500V0.400M11.600 2L12.100 1M13.800 3.400L14.600 2.600" stroke="#000" stroke-width="0.700"/><ellipse cx="9.400" cy="8.700" rx="3" ry="3.600" fill="#000"/><rect x="8.500" y="6.800" width="1.400" height="1.400" fill="#fff"/><rect x="10.200" y="8.800" width="0.900" height="0.900" fill="#888"/><path d="M6.700 12.900H12.200" stroke="#555" stroke-width="0.800"/></svg>
<svg class="a" style="left:1050.5px;top:352.6px" width="17" height="16" viewBox="0 0 17 16"><rect x="0" y="0" width="17" height="16" fill="#fff"/><path d="M15.800 0V15.300H0.500" stroke="#000" stroke-width="1.300" fill="none"/><path d="M7.800 0.700V11.200" stroke="#000" stroke-width="1.600"/><path d="M8.400 0.800L11.200 2.200L8.400 3.600ZM8.400 3.800L11.200 5.200L8.400 6.600ZM8.400 6.600L11.200 7.800L8.400 9Z" fill="#000"/><ellipse cx="7.700" cy="12.400" rx="3.700" ry="1.500" fill="#fff" stroke="#000" stroke-width="1.300"/></svg>
<svg class="a" style="left:1077px;top:355px" width="7" height="10"><path d="M0.500 0.500V9.500L6 5Z" fill="#fff" stroke="#b0b0b0"/></svg>
<div class="a" style="left:1090px;top:353px;width:60px;height:14px;color:#000;font-size:11px;line-height:14px;white-space:nowrap;letter-spacing:-0.15px">b42</div>
<svg class="a" style="left:1027.5px;top:372.6px" width="18" height="16" viewBox="0 0 18 16"><rect x="0" y="0" width="18" height="16" fill="#fff"/><path d="M16.700 0V15.300H1.500" stroke="#000" stroke-width="1.300" fill="none"/><path d="M1 5.600Q8.500 -0.600 15.200 5.900" stroke="#000" stroke-width="1" fill="none"/><path d="M3.800 2.900L3.100 1.900M6.500 1.800L6.200 0.700M9 1.500V0.400M11.600 2L12.100 1M13.800 3.400L14.600 2.600" stroke="#000" stroke-width="0.700"/><ellipse cx="9.400" cy="8.700" rx="3" ry="3.600" fill="#000"/><rect x="8.500" y="6.800" width="1.400" height="1.400" fill="#fff"/><rect x="10.200" y="8.800" width="0.900" height="0.900" fill="#888"/><path d="M6.700 12.900H12.200" stroke="#555" stroke-width="0.800"/></svg>
<svg class="a" style="left:1050.5px;top:372.6px" width="17" height="16" viewBox="0 0 17 16"><rect x="0" y="0" width="17" height="16" fill="#fff"/><path d="M15.800 0V15.300H0.500" stroke="#000" stroke-width="1.300" fill="none"/><path d="M7.800 0.700V11.200" stroke="#000" stroke-width="1.600"/><path d="M8.400 0.800L11.200 2.200L8.400 3.600ZM8.400 3.800L11.200 5.200L8.400 6.600ZM8.400 6.600L11.200 7.800L8.400 9Z" fill="#000"/><ellipse cx="7.700" cy="12.400" rx="3.700" ry="1.500" fill="#fff" stroke="#000" stroke-width="1.300"/></svg>
<svg class="a" style="left:1074.500px;top:377.5px" width="11" height="7"><path d="M0.700 0.600H9.300L5 4.900Z" fill="#fff" stroke="#b4b4b4" stroke-width="0.900"/></svg>
<div class="a" style="left:1090px;top:373px;width:60px;height:14px;color:#000;font-size:11px;line-height:14px;white-space:nowrap;letter-spacing:-0.15px">b43</div>
<svg class="a" style="left:1027.5px;top:392.6px" width="18" height="16" viewBox="0 0 18 16"><rect x="0" y="0" width="18" height="16" fill="#fff"/><path d="M16.700 0V15.300H1.500" stroke="#000" stroke-width="1.300" fill="none"/><path d="M1 5.600Q8.500 -0.600 15.200 5.900" stroke="#000" stroke-width="1" fill="none"/><path d="M3.800 2.900L3.100 1.900M6.500 1.800L6.200 0.700M9 1.500V0.400M11.600 2L12.100 1M13.800 3.400L14.600 2.600" stroke="#000" stroke-width="0.700"/><ellipse cx="9.400" cy="8.700" rx="3" ry="3.600" fill="#000"/><rect x="8.500" y="6.800" width="1.400" height="1.400" fill="#fff"/><rect x="10.200" y="8.800" width="0.900" height="0.900" fill="#888"/><path d="M6.700 12.900H12.200" stroke="#555" stroke-width="0.800"/></svg>
<svg class="a" style="left:1050.5px;top:392.6px" width="17" height="16" viewBox="0 0 17 16"><rect x="0" y="0" width="17" height="16" fill="#fff"/><path d="M15.800 0V15.300H0.500" stroke="#000" stroke-width="1.300" fill="none"/><path d="M7.800 0.700V11.200" stroke="#000" stroke-width="1.600"/><path d="M8.400 0.800L11.200 2.200L8.400 3.600ZM8.400 3.800L11.200 5.200L8.400 6.600ZM8.400 6.600L11.200 7.800L8.400 9Z" fill="#000"/><ellipse cx="7.700" cy="12.400" rx="3.700" ry="1.500" fill="#fff" stroke="#000" stroke-width="1.300"/></svg>
<svg class="a" style="left:1074.500px;top:397.5px" width="11" height="7"><path d="M0.700 0.600H9.300L5 4.900Z" fill="#fff" stroke="#b4b4b4" stroke-width="0.900"/></svg>
<div class="a" style="left:1090px;top:393px;width:60px;height:14px;color:#000;font-size:11px;line-height:14px;white-space:nowrap;letter-spacing:-0.15px">tour1</div>
<svg class="a" style="left:1027.5px;top:412.6px" width="18" height="16" viewBox="0 0 18 16"><rect x="0" y="0" width="18" height="16" fill="#fff"/><path d="M16.700 0V15.300H1.500" stroke="#000" stroke-width="1.300" fill="none"/><path d="M1 5.600Q8.500 -0.600 15.200 5.900" stroke="#000" stroke-width="1" fill="none"/><path d="M3.800 2.900L3.100 1.900M6.500 1.800L6.200 0.700M9 1.500V0.400M11.600 2L12.100 1M13.800 3.400L14.600 2.600" stroke="#000" stroke-width="0.700"/><ellipse cx="9.400" cy="8.700" rx="3" ry="3.600" fill="#000"/><rect x="8.500" y="6.800" width="1.400" height="1.400" fill="#fff"/><rect x="10.200" y="8.800" width="0.900" height="0.900" fill="#888"/><path d="M6.700 12.900H12.200" stroke="#555" stroke-width="0.800"/></svg>
<svg class="a" style="left:1050.5px;top:412.6px" width="17" height="16" viewBox="0 0 17 16"><rect x="0" y="0" width="17" height="16" fill="#fff"/><path d="M15.800 0V15.300H0.500" stroke="#000" stroke-width="1.300" fill="none"/><path d="M7.800 0.700V11.200" stroke="#000" stroke-width="1.600"/><path d="M8.400 0.800L11.200 2.200L8.400 3.600ZM8.400 3.800L11.200 5.200L8.400 6.600ZM8.400 6.600L11.200 7.800L8.400 9Z" fill="#000"/><ellipse cx="7.700" cy="12.400" rx="3.700" ry="1.500" fill="#fff" stroke="#000" stroke-width="1.300"/></svg>
<svg class="a" style="left:1074.500px;top:417.5px" width="11" height="7"><path d="M0.700 0.600H9.300L5 4.900Z" fill="#fff" stroke="#b4b4b4" stroke-width="0.900"/></svg>
<div class="a" style="left:1090px;top:413px;width:60px;height:14px;color:#000;font-size:11px;line-height:14px;white-space:nowrap;letter-spacing:-0.15px">tour2</div>
<svg class="a" style="left:1027.5px;top:432.6px" width="18" height="16" viewBox="0 0 18 16"><rect x="0" y="0" width="18" height="16" fill="#fff"/><path d="M16.700 0V15.300H1.500" stroke="#000" stroke-width="1.300" fill="none"/><path d="M1 5.600Q8.500 -0.600 15.200 5.900" stroke="#000" stroke-width="1" fill="none"/><path d="M3.800 2.900L3.100 1.900M6.500 1.800L6.200 0.700M9 1.500V0.400M11.600 2L12.100 1M13.800 3.400L14.600 2.600" stroke="#000" stroke-width="0.700"/><ellipse cx="9.400" cy="8.700" rx="3" ry="3.600" fill="#000"/><rect x="8.500" y="6.800" width="1.400" height="1.400" fill="#fff"/><rect x="10.200" y="8.800" width="0.900" height="0.900" fill="#888"/><path d="M6.700 12.900H12.200" stroke="#555" stroke-width="0.800"/></svg>
<svg class="a" style="left:1050.5px;top:432.6px" width="17" height="16" viewBox="0 0 17 16"><rect x="0" y="0" width="17" height="16" fill="#fff"/><path d="M15.800 0V15.300H0.500" stroke="#000" stroke-width="1.300" fill="none"/><path d="M7.800 0.700V11.200" stroke="#000" stroke-width="1.600"/><path d="M8.400 0.800L11.200 2.200L8.400 3.600ZM8.400 3.800L11.200 5.200L8.400 6.600ZM8.400 6.600L11.200 7.800L8.400 9Z" fill="#000"/><ellipse cx="7.700" cy="12.400" rx="3.700" ry="1.500" fill="#fff" stroke="#000" stroke-width="1.300"/></svg>
<svg class="a" style="left:1074.500px;top:437.5px" width="11" height="7"><path d="M0.700 0.600H9.300L5 4.900Z" fill="#fff" stroke="#b4b4b4" stroke-width="0.900"/></svg>
<div class="a" style="left:1090px;top:433px;width:60px;height:14px;color:#000;font-size:11px;line-height:14px;white-space:nowrap;letter-spacing:-0.15px">tour3</div>
<svg class="a" style="left:1027.5px;top:452.6px" width="18" height="16" viewBox="0 0 18 16"><rect x="0" y="0" width="18" height="16" fill="#fff"/><path d="M16.700 0V15.300H1.500" stroke="#000" stroke-width="1.300" fill="none"/><path d="M1 5.600Q8.500 -0.600 15.200 5.900" stroke="#000" stroke-width="1" fill="none"/><path d="M3.800 2.900L3.100 1.900M6.500 1.800L6.200 0.700M9 1.500V0.400M11.600 2L12.100 1M13.800 3.400L14.600 2.600" stroke="#000" stroke-width="0.700"/><ellipse cx="9.400" cy="8.700" rx="3" ry="3.600" fill="#000"/><rect x="8.500" y="6.800" width="1.400" height="1.400" fill="#fff"/><rect x="10.200" y="8.800" width="0.900" height="0.900" fill="#888"/><path d="M6.700 12.900H12.200" stroke="#555" stroke-width="0.800"/></svg>
<svg class="a" style="left:1050.5px;top:452.6px" width="17" height="16" viewBox="0 0 17 16"><rect x="0" y="0" width="17" height="16" fill="#fff"/><path d="M15.800 0V15.300H0.500" stroke="#000" stroke-width="1.300" fill="none"/><path d="M7.800 0.700V11.200" stroke="#000" stroke-width="1.600"/><path d="M8.400 0.800L11.200 2.200L8.400 3.600ZM8.400 3.800L11.200 5.200L8.400 6.600ZM8.400 6.600L11.200 7.800L8.400 9Z" fill="#000"/><ellipse cx="7.700" cy="12.400" rx="3.700" ry="1.500" fill="#fff" stroke="#000" stroke-width="1.300"/></svg>
<svg class="a" style="left:1074.500px;top:457.5px" width="11" height="7"><path d="M0.700 0.600H9.300L5 4.900Z" fill="#fff" stroke="#b4b4b4" stroke-width="0.900"/></svg>
<div class="a" style="left:1090px;top:453px;width:60px;height:14px;color:#000;font-size:11px;line-height:14px;white-space:nowrap;letter-spacing:-0.15px">tour3b</div>
<svg class="a" style="left:146px;top:86px" width="872" height="746" viewBox="146 86 872 746">
<defs>
<linearGradient id="cyl" x1="0" x2="1" y1="0" y2="0"><stop offset="0" stop-color="#262626"/><stop offset="0.4" stop-color="#3c3c3c"/><stop offset="0.72" stop-color="#8c8c8c"/><stop offset="0.9" stop-color="#6a6a6a"/><stop offset="1" stop-color="#404040"/></linearGradient>
<linearGradient id="con" x1="0" x2="1" y1="0" y2="0"><stop offset="0" stop-color="#2c2c2c"/><stop offset="0.4" stop-color="#505050"/><stop offset="0.65" stop-color="#989898"/><stop offset="1" stop-color="#606060"/></linearGradient>
<linearGradient id="cylR" x1="0" x2="1" y1="0" y2="0"><stop offset="0" stop-color="#242424"/><stop offset="0.5" stop-color="#2e2e2e"/><stop offset="0.8" stop-color="#747474"/><stop offset="1" stop-color="#4a4a4a"/></linearGradient>
<linearGradient id="conR" x1="0" x2="1" y1="0" y2="0"><stop offset="0" stop-color="#262626"/><stop offset="0.5" stop-color="#343434"/><stop offset="0.82" stop-color="#7c7c7c"/><stop offset="1" stop-color="#505050"/></linearGradient>
<linearGradient id="rin" x1="640" y1="300" x2="770" y2="480" gradientUnits="userSpaceOnUse"><stop offset="0" stop-color="#646464"/><stop offset="0.35" stop-color="#505050"/><stop offset="0.36" stop-color="#464646"/><stop offset="0.7" stop-color="#383838"/><stop offset="1" stop-color="#2c2c2c"/></linearGradient>
<linearGradient id="bwall" x1="452" y1="0" x2="631" y2="0" gradientUnits="userSpaceOnUse"><stop offset="0" stop-color="#626262"/><stop offset="0.29" stop-color="#656565"/><stop offset="0.295" stop-color="#6c6c6c"/><stop offset="0.66" stop-color="#6a6a6a"/><stop offset="0.665" stop-color="#737373"/><stop offset="1" stop-color="#6c6c6c"/></linearGradient>
<linearGradient id="broof" x1="400" y1="430" x2="640" y2="300" gradientUnits="userSpaceOnUse"><stop offset="0" stop-color="#acacac"/><stop offset="0.25" stop-color="#a0a0a0"/><stop offset="0.6" stop-color="#a6a6a6"/><stop offset="1" stop-color="#a9a9a9"/></linearGradient>
</defs>
<rect x="146" y="86" width="874" height="746" fill="#1B415B"/>
<polyline points="147.0,125.0 222.0,86.0" fill="none" stroke="#567c7e" stroke-width="1" />
<polyline points="147.0,106.0 362.0,430.0" fill="none" stroke="#5a7f90" stroke-width="1" />
<polyline points="515.0,657.0 631.0,831.0" fill="none" stroke="#567c7e" stroke-width="1" />
<polyline points="801.0,86.0 1019.0,362.0" fill="none" stroke="#567c7e" stroke-width="1" />
<polyline points="505.0,527.0 1019.0,233.0" fill="none" stroke="#567c7e" stroke-width="1" />
<polyline points="147.0,733.8 418.4,578.7" fill="none" stroke="#B02C3C" stroke-width="1.4" />
<polygon points="638.6,209.5 636.5,282.0 636.6,283.9 637.0,285.8 637.8,287.7 638.9,289.5 640.3,291.3 641.9,293.1 643.9,294.7 646.0,296.1 648.3,297.4 650.8,298.5 653.4,299.4 656.0,300.0 658.6,300.4 661.2,300.6 663.8,300.5 666.2,300.1 668.4,299.5 670.4,298.7 672.2,297.7 673.8,296.5 675.0,295.1 675.9,293.5 676.5,291.8 676.8,290.0 679.4,206.0 679.4,206.0 679.3,208.2 678.8,210.4 678.0,212.6 676.9,214.7 675.4,216.7 673.7,218.5 671.7,220.1 669.5,221.6 667.2,222.7 664.7,223.7 662.1,224.3 659.4,224.7 656.7,224.8 654.1,224.6 651.6,224.1 649.1,223.3 646.9,222.3 644.9,221.0 643.1,219.5 641.5,217.7 640.3,215.9 639.4,213.8 638.8,211.7 638.6,209.5" fill="url(#cyl)" stroke="#EE82C6" stroke-width="0.9" />
<path d="M661.2,160.1 Q646.9,183.9 638.6,209.5 L638.6,209.5 L638.8,211.7 L639.4,213.8 L640.3,215.9 L641.5,217.7 L643.1,219.5 L644.9,221.0 L646.9,222.3 L649.1,223.3 L651.6,224.1 L654.1,224.6 L656.7,224.8 L659.4,224.7 L662.1,224.3 L664.7,223.7 L667.2,222.7 L669.5,221.6 L671.7,220.1 L673.7,218.5 L675.4,216.7 L676.9,214.7 L678.0,212.6 L678.8,210.4 L679.3,208.2 L679.4,206.0Z" fill="url(#con)" stroke="#EE82C6" stroke-width="0.9"/>
<path d="M661.2,160.1 Q668.8,187.3 676.9,214.7 L673.8,296.5" fill="none" stroke="#EE82C6" stroke-width="0.75"/>
<path d="M661.2,160.1 Q664.6,190.6 669.5,221.6 L666.2,300.1" fill="none" stroke="#EE82C6" stroke-width="0.75"/>
<path d="M661.2,160.1 Q658.8,191.9 659.4,224.7 L656.0,300.0" fill="none" stroke="#EE82C6" stroke-width="0.75"/>
<path d="M661.2,160.1 Q652.9,191.0 649.1,223.3 L646.0,296.1" fill="none" stroke="#EE82C6" stroke-width="0.75"/>
<path d="M661.2,160.1 Q648.6,188.1 641.5,217.7 L638.9,289.5" fill="none" stroke="#EE82C6" stroke-width="0.75"/>
<polyline points="679.4,206.0 679.3,208.2 678.8,210.4 678.0,212.6 676.9,214.7 675.4,216.7 673.7,218.5 671.7,220.1 669.5,221.6 667.2,222.7 664.7,223.7 662.1,224.3 659.4,224.7 656.7,224.8 654.1,224.6 651.6,224.1 649.1,223.3 646.9,222.3 644.9,221.0 643.1,219.5 641.5,217.7 640.3,215.9 639.4,213.8 638.8,211.7 638.6,209.5" fill="none" stroke="#EE82C6" stroke-width="0.9" />
<polyline points="679.4,212.0 679.3,214.2 678.8,216.4 678.0,218.6 676.9,220.7 675.4,222.7 673.7,224.5 671.7,226.1 669.5,227.6 667.2,228.7 664.7,229.7 662.1,230.3 659.4,230.7 656.7,230.8 654.1,230.6 651.6,230.1 649.1,229.3 646.9,228.3 644.9,227.0 643.1,225.5 641.5,223.7 640.3,221.9 639.4,219.8 638.8,217.7 638.6,215.5" fill="none" stroke="#EE82C6" stroke-width="0.8" />
<polygon points="349.0,430.4 652.1,262.2 643.4,276.0 395.9,414.8" fill="#747474" stroke="#EE82C6" stroke-width="0.9" />
<polygon points="395.9,414.8 643.4,276.0 631.2,352.4 452.5,451.5" fill="#a3a3a3" />
<polygon points="395.9,414.8 495.7,358.6 452.5,451.5" fill="#acacac" />
<polygon points="452.5,451.5 495.7,358.6 579.6,373.0 586.0,377.5" fill="#a8a8a8" />
<polygon points="495.7,358.6 643.4,276.0 631.7,318.0 579.6,373.0" fill="#9d9d9d" />
<polygon points="631.7,318.0 643.4,276.0 631.2,352.4 586.0,377.5 579.6,373.0" fill="#a6a6a6" />
<polygon points="395.9,414.8 643.4,276.0 631.2,352.4 452.5,451.5" fill="none" stroke="#EE82C6" stroke-width="0.9" />
<polygon points="452.5,451.5 631.2,352.4 629.0,404.0 479.0,491.1" fill="url(#bwall)" stroke="#EE82C6" stroke-width="0.9" />
<polygon points="541.7,323.3 550.0,312.4 562.5,312.0" fill="#c8b0c4" stroke="#EE82C6" stroke-width="0.7" />
<polygon points="550.0,312.4 562.5,312.0 556.0,316.0" fill="#f0d8ec" />
<polygon points="583.0,374.0 585.0,364.5 600.0,367.0" fill="#d8c0d4" stroke="#EE82C6" stroke-width="0.7" />
<polygon points="592.0,364.5 599.0,366.5 597.0,371.0" fill="#a090a0" />
<polygon points="631.2,352.4 746.0,509.3 746.0,522.0 719.0,536.0 629.0,404.0" fill="#262626" stroke="#EE82C6" stroke-width="0.9" />
<polygon points="643.4,276.0 804.2,498.6 790.0,508.0 746.0,518.0 746.0,509.3 631.2,352.4" fill="url(#rin)" />
<polyline points="631.2,352.4 643.4,276.0 804.2,498.6" fill="none" stroke="#EE82C6" stroke-width="0.9" />
<polyline points="631.2,352.4 746.0,509.3" fill="none" stroke="#EE82C6" stroke-width="0.9" />
<polygon points="777.0,425.0 782.0,423.0 790.0,444.0 785.0,437.0" fill="#c0a8bc" stroke="#EE82C6" stroke-width="0.6" />
<polygon points="801.0,461.0 806.0,459.0 814.0,480.0 809.0,473.0" fill="#c0a8bc" stroke="#EE82C6" stroke-width="0.6" />
<polygon points="820.0,485.0 825.0,483.0 833.0,504.0 828.0,497.0" fill="#c0a8bc" stroke="#EE82C6" stroke-width="0.6" />
<polygon points="652.1,262.2 853.6,533.4 804.2,498.6 643.4,276.0" fill="#c8c6c8" stroke="#EE82C6" stroke-width="0.9" />
<polygon points="686.8,309.0 694.6,310.0 699.8,323.0 695.5,322.0 690.3,313.4" fill="#b4a4b4" stroke="#EE82C6" stroke-width="0.6" />
<polygon points="679.0,321.2 686.0,328.1 685.0,347.2 678.1,338.5" fill="#282828" stroke="#EE82C6" stroke-width="0.8" />
<polygon points="686.0,328.1 695.5,323.0 695.1,340.3 690.3,342.0 690.1,334.6 686.0,337.6" fill="#6c6c6c" stroke="#EE82C6" stroke-width="0.6" />
<polygon points="679.9,318.6 690.3,313.4 695.5,322.0 686.0,327.3" fill="#ece0e8" stroke="#EE82C6" stroke-width="0.8" />
<polyline points="685.1,316.0 690.8,324.6" fill="none" stroke="#EE82C6" stroke-width="0.7" />
<polygon points="722.0,358.0 729.8,359.0 735.0,372.0 730.7,371.0 725.5,362.4" fill="#b4a4b4" stroke="#EE82C6" stroke-width="0.6" />
<polygon points="714.2,370.2 721.2,377.1 720.2,396.2 713.3,387.5" fill="#282828" stroke="#EE82C6" stroke-width="0.8" />
<polygon points="721.2,377.1 730.7,372.0 730.3,389.3 725.5,391.0 725.3,383.6 721.2,386.6" fill="#6c6c6c" stroke="#EE82C6" stroke-width="0.6" />
<polygon points="715.1,367.6 725.5,362.4 730.7,371.0 721.2,376.3" fill="#ece0e8" stroke="#EE82C6" stroke-width="0.8" />
<polyline points="720.3,365.0 726.0,373.6" fill="none" stroke="#EE82C6" stroke-width="0.7" />
<polygon points="757.2,406.9 765.0,407.9 770.2,420.9 765.9,419.9 760.7,411.3" fill="#b4a4b4" stroke="#EE82C6" stroke-width="0.6" />
<polygon points="749.4,419.1 756.4,426.0 755.4,445.1 748.5,436.4" fill="#282828" stroke="#EE82C6" stroke-width="0.8" />
<polygon points="756.4,426.0 765.9,420.9 765.5,438.2 760.7,439.9 760.5,432.5 756.4,435.5" fill="#6c6c6c" stroke="#EE82C6" stroke-width="0.6" />
<polygon points="750.3,416.5 760.7,411.3 765.9,419.9 756.4,425.2" fill="#ece0e8" stroke="#EE82C6" stroke-width="0.8" />
<polyline points="755.5,413.9 761.2,422.5" fill="none" stroke="#EE82C6" stroke-width="0.7" />
<polygon points="307.4,428.2 318.6,482.8 318.8,484.8 319.4,486.9 320.3,488.8 321.4,490.6 322.9,492.4 324.6,493.9 326.6,495.3 328.8,496.4 331.1,497.3 333.5,498.0 336.0,498.4 338.6,498.5 341.1,498.4 343.6,498.0 346.0,497.3 348.3,496.4 350.4,495.3 352.3,493.9 353.9,492.4 355.3,490.6 356.4,488.8 357.2,486.9 357.6,484.8 357.7,482.8 348.6,430.4 348.6,430.4 348.6,432.5 348.2,434.6 347.4,436.5 346.3,438.4 345.0,440.0 343.3,441.5 341.3,442.8 339.2,443.9 336.8,444.7 334.3,445.2 331.7,445.5 329.0,445.5 326.3,445.2 323.6,444.7 321.0,443.8 318.6,442.8 316.3,441.5 314.1,440.0 312.3,438.3 310.7,436.4 309.4,434.5 308.4,432.4 307.7,430.3 307.4,428.2" fill="url(#cyl)" stroke="#EE82C6" stroke-width="0.9" />
<path d="M319.5,382.5 Q310.4,404.5 307.4,428.2 L307.4,428.2 L307.7,430.3 L308.4,432.4 L309.4,434.5 L310.7,436.4 L312.3,438.3 L314.1,440.0 L316.3,441.5 L318.6,442.8 L321.0,443.8 L323.6,444.7 L326.3,445.2 L329.0,445.5 L331.7,445.5 L334.3,445.2 L336.8,444.7 L339.2,443.9 L341.3,442.8 L343.3,441.5 L345.0,440.0 L346.3,438.4 L347.4,436.5 L348.2,434.6 L348.6,432.5 L348.6,430.4Z" fill="url(#con)" stroke="#EE82C6" stroke-width="0.9"/>
<path d="M319.5,382.5 Q332.7,410.4 346.3,438.4 L355.3,490.6" fill="none" stroke="#EE82C6" stroke-width="0.75"/>
<path d="M319.5,382.5 Q328.6,413.0 339.2,443.9 L348.3,496.4" fill="none" stroke="#EE82C6" stroke-width="0.75"/>
<path d="M319.5,382.5 Q322.8,413.6 329.0,445.5 L338.6,498.5" fill="none" stroke="#EE82C6" stroke-width="0.75"/>
<path d="M319.5,382.5 Q316.8,412.0 318.6,442.8 L328.8,496.4" fill="none" stroke="#EE82C6" stroke-width="0.75"/>
<path d="M319.5,382.5 Q312.3,408.6 310.7,436.4 L321.4,490.6" fill="none" stroke="#EE82C6" stroke-width="0.75"/>
<polyline points="348.6,430.4 348.6,432.5 348.2,434.6 347.4,436.5 346.3,438.4 345.0,440.0 343.3,441.5 341.3,442.8 339.2,443.9 336.8,444.7 334.3,445.2 331.7,445.5 329.0,445.5 326.3,445.2 323.6,444.7 321.0,443.8 318.6,442.8 316.3,441.5 314.1,440.0 312.3,438.3 310.7,436.4 309.4,434.5 308.4,432.4 307.7,430.3 307.4,428.2" fill="none" stroke="#EE82C6" stroke-width="0.9" />
<polyline points="348.6,435.4 348.6,437.5 348.2,439.6 347.4,441.5 346.3,443.4 345.0,445.0 343.3,446.5 341.3,447.8 339.2,448.9 336.8,449.7 334.3,450.2 331.7,450.5 329.0,450.5 326.3,450.2 323.6,449.7 321.0,448.8 318.6,447.8 316.3,446.5 314.1,445.0 312.3,443.3 310.7,441.4 309.4,439.5 308.4,437.4 307.7,435.3 307.4,433.2" fill="none" stroke="#EE82C6" stroke-width="0.8" />
<polygon points="349.0,430.4 480.4,628.0 483.1,675.3 352.0,449.0" fill="#2a2a2a" stroke="#EE82C6" stroke-width="0.9" />
<polygon points="349.0,430.4 395.9,414.8 510.3,586.0 480.4,628.0" fill="#575757" stroke="#EE82C6" stroke-width="0.9" />
<polygon points="395.9,414.8 452.5,451.5 545.2,590.0 510.3,586.0" fill="#c8c8c8" stroke="#EE82C6" stroke-width="0.9" />
<polyline points="395.9,414.8 452.5,451.5" fill="none" stroke="#303030" stroke-width="0.9" stroke-dasharray="2 2"/>
<polygon points="480.4,628.0 510.3,586.0 545.2,590.0 546.4,637.6 483.1,675.3" fill="#5e5e5e" stroke="#EE82C6" stroke-width="0.9" />
<polyline points="510.3,586.0 513.2,657.4" fill="none" stroke="#EE82C6" stroke-width="0.9" />
<polyline points="480.4,628.0 545.2,590.0" fill="none" stroke="#EE82C6" stroke-width="0.9" />
<polygon points="473.6,532.0 479.3,539.3 479.3,554.3 473.6,548.2" fill="#282828" stroke="#EE82C6" stroke-width="0.7" />
<polygon points="479.3,539.3 488.6,532.8 489.8,548.2 484.0,550.0 483.8,543.0 482.0,551.0" fill="#6c6c6c" stroke="#EE82C6" stroke-width="0.6" />
<polygon points="473.6,530.0 482.5,523.1 488.6,532.0 479.3,538.0" fill="#ece0e8" stroke="#EE82C6" stroke-width="0.8" />
<polygon points="598.5,601.2 744.3,516.9 767.7,509.0 804.2,498.6 620.6,607.3" fill="#7a7a7a" stroke="#EE82C6" stroke-width="0.9" />
<polygon points="620.6,607.3 804.2,498.6 853.6,533.4 640.6,660.3" fill="#aaa" stroke="#EE82C6" stroke-width="0.9" />
<polyline points="804.2,498.6 848.0,529.0" fill="none" stroke="#303030" stroke-width="0.9" stroke-dasharray="2 2"/>
<polygon points="640.6,660.3 737.6,602.5 732.6,651.6 638.5,707.2" fill="#6b6b6b" stroke="#EE82C6" stroke-width="0.9" />
<polygon points="790.2,571.2 853.6,533.4 845.0,582.8 784.5,618.0" fill="#6b6b6b" stroke="#EE82C6" stroke-width="0.9" />
<polygon points="598.5,601.2 620.6,607.3 640.6,660.3 638.5,707.2 597.2,649.0" fill="#282828" stroke="#EE82C6" stroke-width="0.9" />
<polygon points="638.8,680.2 734.6,624.5 732.6,651.6 638.5,707.2" fill="#646464" />
<polygon points="787.5,593.0 849.3,556.8 845.0,582.8 784.5,618.0" fill="#646464" />
<polyline points="638.8,680.2 734.6,624.5" fill="none" stroke="#EE82C6" stroke-width="0.9" />
<polyline points="787.5,593.0 849.3,556.8" fill="none" stroke="#EE82C6" stroke-width="0.9" />
<polyline points="638.5,707.2 732.6,651.6 737.6,602.5" fill="none" stroke="#EE82C6" stroke-width="0.9" />
<polyline points="784.5,618.0 845.0,582.8" fill="none" stroke="#EE82C6" stroke-width="0.9" />
<polyline points="598.0,622.0 638.8,680.2" fill="none" stroke="#EE82C6" stroke-width="0.9" />
<polyline points="598.5,601.2 640.6,660.3" fill="none" stroke="#EE82C6" stroke-width="0.9" />
<polyline points="620.6,607.3 618.0,677.6" fill="none" stroke="#EE82C6" stroke-width="0.9" />
<polygon points="737.6,602.5 790.2,571.2 788.0,586.0 785.0,589.0 766.3,595.3 756.0,601.5 745.0,611.0 736.0,622.0" fill="#5e5860" stroke="#EE82C6" stroke-width="0.7" />
<polygon points="766.3,595.3 785.0,589.0 787.6,591.7 784.5,618.0" fill="#262626" stroke="#EE82C6" stroke-width="0.7" />
<path d="M736.500 617 Q752 598 788 580 M741 607 L790.200 571.200 M752 600 L790.200 571.200 M770 590 L790.200 571.200 M781 588 L790.200 571.200 M745 599 L745 611" fill="none" stroke="#EE82C6" stroke-width="0.6"/>
<polygon points="746.0,522.0 757.3,530.0 756.4,544.6 747.7,536.0" fill="#262626" stroke="#EE82C6" stroke-width="0.8" />
<polygon points="757.3,530.0 768.6,523.0 766.8,538.6 756.4,544.6" fill="#5c5c5c" stroke="#EE82C6" stroke-width="0.8" />
<polygon points="759.0,500.4 746.0,512.5 746.0,522.0 757.3,530.0" fill="#3c3c3c" stroke="#EE82C6" stroke-width="0.8" />
<polygon points="759.0,500.4 757.3,530.0 768.6,523.0 768.6,514.0" fill="url(#con)" stroke="#EE82C6" stroke-width="0.8" />
<polyline points="759.0,500.4 750.0,524.0" fill="none" stroke="#EE82C6" stroke-width="0.6" />
<polygon points="902.7,510.0 896.8,550.0 896.9,551.3 897.1,552.5 897.5,553.8 898.0,554.9 898.6,556.0 899.4,557.0 900.2,557.9 901.2,558.7 902.2,559.3 903.3,559.7 904.4,560.1 905.6,560.2 906.8,560.2 907.9,560.0 909.0,559.7 910.0,559.2 911.0,558.5 911.9,557.7 912.6,556.8 913.3,555.8 913.8,554.7 914.2,553.5 914.4,552.3 914.5,551.0 924.3,513.0 924.3,513.0 924.2,514.5 923.9,515.9 923.5,517.2 922.9,518.4 922.1,519.6 921.1,520.6 920.1,521.4 918.9,522.0 917.6,522.5 916.3,522.8 914.9,522.9 913.5,522.8 912.1,522.5 910.7,522.0 909.4,521.4 908.1,520.5 906.9,519.6 905.9,518.4 904.9,517.2 904.1,515.9 903.5,514.4 903.1,513.0 902.8,511.5 902.7,510.0" fill="url(#cylR)" stroke="#EE82C6" stroke-width="0.9" />
<path d="M923.3,481.5 Q911.0,495.1 902.7,510.0 L902.7,510.0 L902.8,511.5 L903.1,513.0 L903.5,514.4 L904.1,515.9 L904.9,517.2 L905.9,518.4 L906.9,519.6 L908.1,520.5 L909.4,521.4 L910.7,522.0 L912.1,522.5 L913.5,522.8 L914.9,522.9 L916.3,522.8 L917.6,522.5 L918.9,522.0 L920.1,521.4 L921.1,520.6 L922.1,519.6 L922.9,518.4 L923.5,517.2 L923.9,515.9 L924.2,514.5 L924.3,513.0Z" fill="url(#conR)" stroke="#EE82C6" stroke-width="0.9"/>
<path d="M923.3,481.5 Q922.9,499.9 922.9,518.4 L913.3,555.8" fill="none" stroke="#EE82C6" stroke-width="0.75"/>
<path d="M923.3,481.5 Q920.6,501.6 918.9,522.0 L910.0,559.2" fill="none" stroke="#EE82C6" stroke-width="0.75"/>
<path d="M923.3,481.5 Q917.4,501.8 913.5,522.8 L905.6,560.2" fill="none" stroke="#EE82C6" stroke-width="0.75"/>
<path d="M923.3,481.5 Q914.2,500.6 908.1,520.5 L901.2,558.7" fill="none" stroke="#EE82C6" stroke-width="0.75"/>
<path d="M923.3,481.5 Q911.9,498.1 904.1,515.9 L898.0,554.9" fill="none" stroke="#EE82C6" stroke-width="0.75"/>
<polyline points="924.3,513.0 924.2,514.5 923.9,515.9 923.5,517.2 922.9,518.4 922.1,519.6 921.1,520.6 920.1,521.4 918.9,522.0 917.6,522.5 916.3,522.8 914.9,522.9 913.5,522.8 912.1,522.5 910.7,522.0 909.4,521.4 908.1,520.5 906.9,519.6 905.9,518.4 904.9,517.2 904.1,515.9 903.5,514.4 903.1,513.0 902.8,511.5 902.7,510.0" fill="none" stroke="#EE82C6" stroke-width="0.9" />
<polyline points="924.3,517.0 924.2,518.5 923.9,519.9 923.5,521.2 922.9,522.4 922.1,523.6 921.1,524.6 920.1,525.4 918.9,526.0 917.6,526.5 916.3,526.8 914.9,526.9 913.5,526.8 912.1,526.5 910.7,526.0 909.4,525.4 908.1,524.5 906.9,523.6 905.9,522.4 904.9,521.2 904.1,519.9 903.5,518.4 903.1,517.0 902.8,515.5 902.7,514.0" fill="none" stroke="#EE82C6" stroke-width="0.8" />
<polygon points="855.4,535.6 843.6,591.7 843.8,593.7 844.2,595.7 845.0,597.7 846.1,599.7 847.5,601.7 849.1,603.6 850.9,605.3 852.9,606.9 855.1,608.4 857.5,609.6 859.9,610.6 862.3,611.4 864.7,611.9 867.1,612.2 869.5,612.2 871.6,611.9 873.7,611.4 875.5,610.6 877.1,609.6 878.5,608.3 879.6,606.9 880.4,605.2 880.8,603.5 881.0,601.6 895.8,545.5 895.8,545.5 895.8,547.0 895.5,548.4 894.8,549.7 893.8,550.8 892.5,551.7 890.9,552.4 889.0,553.0 886.9,553.3 884.6,553.4 882.2,553.3 879.6,552.9 877.0,552.4 874.4,551.7 871.7,550.7 869.2,549.6 866.7,548.3 864.4,546.9 862.3,545.4 860.4,543.8 858.8,542.2 857.5,540.5 856.5,538.8 855.8,537.2 855.4,535.6" fill="url(#cylR)" stroke="#EE82C6" stroke-width="0.9" />
<path d="M894.4,462.8 Q866.9,496.8 855.4,535.6 L855.4,535.6 L855.8,537.2 L856.5,538.8 L857.5,540.5 L858.8,542.2 L860.4,543.8 L862.3,545.4 L864.4,546.9 L866.7,548.3 L869.2,549.6 L871.7,550.7 L874.4,551.7 L877.0,552.4 L879.6,552.9 L882.2,553.3 L884.6,553.4 L886.9,553.3 L889.0,553.0 L890.9,552.4 L892.5,551.7 L893.8,550.8 L894.8,549.7 L895.5,548.4 L895.8,547.0 L895.8,545.5Z" fill="url(#conR)" stroke="#EE82C6" stroke-width="0.9"/>
<path d="M894.4,462.8 Q894.5,506.0 895.1,549.3 L879.9,606.3" fill="none" stroke="#EE82C6" stroke-width="0.75"/>
<path d="M894.4,462.8 Q892.3,507.1 892.0,552.0 L876.6,609.9" fill="none" stroke="#EE82C6" stroke-width="0.75"/>
<path d="M894.4,462.8 Q888.7,507.4 886.9,553.3 L871.6,611.9" fill="none" stroke="#EE82C6" stroke-width="0.75"/>
<path d="M894.4,462.8 Q884.1,506.9 880.5,553.1 L865.5,612.0" fill="none" stroke="#EE82C6" stroke-width="0.75"/>
<path d="M894.4,462.8 Q879.2,505.7 873.5,551.4 L859.1,610.3" fill="none" stroke="#EE82C6" stroke-width="0.75"/>
<path d="M894.4,462.8 Q874.6,503.8 866.7,548.3 L852.9,606.9" fill="none" stroke="#EE82C6" stroke-width="0.75"/>
<path d="M894.4,462.8 Q870.6,501.5 861.0,544.4 L848.0,602.3" fill="none" stroke="#EE82C6" stroke-width="0.75"/>
<path d="M894.4,462.8 Q868.0,499.0 857.1,540.0 L844.7,597.0" fill="none" stroke="#EE82C6" stroke-width="0.75"/>
<polyline points="895.8,545.5 895.8,547.0 895.5,548.4 894.8,549.7 893.8,550.8 892.5,551.7 890.9,552.4 889.0,553.0 886.9,553.3 884.6,553.4 882.2,553.3 879.6,552.9 877.0,552.4 874.4,551.7 871.7,550.7 869.2,549.6 866.7,548.3 864.4,546.9 862.3,545.4 860.4,543.8 858.8,542.2 857.5,540.5 856.5,538.8 855.8,537.2 855.4,535.6" fill="none" stroke="#EE82C6" stroke-width="0.9" />
<polyline points="895.8,550.5 895.8,552.0 895.5,553.4 894.8,554.7 893.8,555.8 892.5,556.7 890.9,557.4 889.0,558.0 886.9,558.3 884.6,558.4 882.2,558.3 879.6,557.9 877.0,557.4 874.4,556.7 871.7,555.7 869.2,554.6 866.7,553.3 864.4,551.9 862.3,550.4 860.4,548.8 858.8,547.2 857.5,545.5 856.5,543.8 855.8,542.2 855.4,540.6" fill="none" stroke="#EE82C6" stroke-width="0.8" />
<polyline points="399.0,86.0 441.0,481.0" fill="none" stroke="#18C828" stroke-width="1.4" />
</svg>
<div class="a" style="left:86px;top:446px;width:86px;height:176px;background:#6E7EDA;border-radius:3px 3px 0 0;box-shadow:inset 1px 1px 0 #8a98e8,inset -1px -1px 0 #4a58b8"></div>
<div class="a" style="left:87px;top:447px;width:84px;height:20px;background:linear-gradient(90deg,#8E9EEC,#7282E0 50%,#6272D6);border-radius:2px 2px 0 0"></div>
<div class="a" style="left:89px;top:450px;width:60px;height:14px;color:#fff;font-family:'Liberation Serif',serif;font-weight:bold;font-size:13px;line-height:14px;letter-spacing:0.1px">Select</div>
<div class="a" style="left:90px;top:467px;width:79px;height:151px;background:#ECE9D8"></div>
<div class="b p" style="left:97px;top:475px;width:64px;height:17px;font-size:11px;line-height:19px;letter-spacing:-0.2px">Normal</div>
<div class="b " style="left:97px;top:492px;width:64px;height:17px;font-size:11px;line-height:16px;letter-spacing:-0.2px">Joined face</div>
<div class="b " style="left:97px;top:509px;width:64px;height:17px;font-size:11px;line-height:16px;letter-spacing:-0.2px">Belt</div>
<div class="b " style="left:97px;top:526px;width:64px;height:17px;font-size:11px;line-height:16px;letter-spacing:-0.2px">Edge loop</div>
<div class="b " style="left:97px;top:543px;width:64px;height:17px;font-size:11px;line-height:16px;letter-spacing:-0.2px">Growing</div>
<div class="b " style="left:97px;top:560px;width:64px;height:17px;font-size:11px;line-height:16px;letter-spacing:-0.2px">Route</div>
<div class="b " style="left:97px;top:577px;width:64px;height:17px;font-size:11px;line-height:16px;letter-spacing:-0.2px">CurObj</div>
<div class="b " style="left:97px;top:594px;width:64px;height:17px;font-size:11px;line-height:16px;letter-spacing:-0.2px">Brush</div>
<div class="a" style="left:0px;top:834px;width:1152px;height:30px;background:linear-gradient(#3168D5 0%,#4993E6 6%,#2B71E0 12%,#2663DA 30%,#2560D8 60%,#2457CE 85%,#1D4CB8 100%)"></div>
<div class="a" style="left:0px;top:834px;width:91px;height:30px;background:linear-gradient(#3C8A3C 0%,#58B858 8%,#3FA23F 20%,#379937 60%,#2E8A2E 90%,#256F25 100%);border-radius:0 12px 12px 0;box-shadow:inset -3px 0 4px #2a6a2a"></div>
<svg class="a" style="left:9px;top:837px" width="24" height="22" viewBox="0 0 22 20">
<path d="M3 2.500C5 1 7 1 9 2.500L8 8.500C6 7.500 4 7.500 2 8.500Z" fill="#E8602C"/>
<path d="M11 3C13 4 15.500 4 18 2.500L16.500 9C14.500 10 12.500 10 10 9Z" fill="#78C030"/>
<path d="M1.800 10C4 9 6 9 8 10L7 16C5 15 3 15 1 16Z" fill="#4878D8"/>
<path d="M9.800 10.500C12 11.500 14.500 11.500 16.500 10.500L15.500 16.500C13 17.500 11 17.500 8.800 16.500Z" fill="#F0C020"/></svg>
<svg class="a" style="left:34px;top:840px" width="36" height="18" viewBox="0 0 36 18"><g transform="skewX(-14) translate(4,0)" stroke="#fff" stroke-width="1.250" fill="none">
<path d="M1.500 1.500V15M1.500 1.500H6.500V7H1.500M1.500 4.200H6.500M9.500 1.500H14.500V15.500L13 15M9.500 1.500V7H14.500M9.500 4.200H14.500M4 9.500H12M3 12.500H13M6 9.500L4.500 15.500M10 9.500V15.500"/>
<path d="M20 1L17.500 8L22 7M22.500 4.500C22 9 20 13 17 15.500M18.500 8.500L22.500 14.500M27.500 1L24.500 6.500H31.500M29.500 3.500L31.500 6.500M25 9.500H31V15H25Z"/></g></svg>
<div class="a" style="left:103px;top:841px;width:16px;height:16px;background:#fff;border:1px solid #ccc"></div>
<div class="a" style="left:104px;top:846px;width:14px;height:6px;background:#F0C000"></div>
<div class="a" style="left:104px;top:852px;width:14px;height:2px;background:#C03000"></div>
<svg class="a" style="left:125px;top:839px" width="20" height="20" viewBox="0 0 20 20"><path d="M14.500 8.500A5 5 0 1 0 13.500 13" stroke="#5AB0F8" stroke-width="3" fill="none"/><path d="M6 10H14" stroke="#5AB0F8" stroke-width="2"/><path d="M2 16C0 12 8 3 17 2C19 3 17 6 16 7" stroke="#F0C020" stroke-width="1.500" fill="none"/></svg>
<svg class="a" style="left:148px;top:840px" width="18" height="18" viewBox="0 0 18 18"><circle cx="9" cy="9.500" r="7" fill="#3C7CE8" stroke="#BCD8F8" stroke-width="1"/><rect x="5" y="5" width="8" height="9" fill="#fff"/><path d="M7 8H11M7 10.500H11" stroke="#3C7CE8"/><path d="M13 3l3 2-2 2z" fill="#E03030"/></svg>
<div class="a" style="left:176px;top:837px;width:158px;height:25px;background:linear-gradient(#5A9CF0 0%,#3C80F0 12%,#3A7CEC 50%,#3272E4 90%,#2A62CC 100%);box-shadow:inset 1px 1px 0 #6AA8F8,inset -1px -1px 0 #2450B0;border-radius:3px"></div>
<svg class="a" style="left:185px;top:841px" width="18" height="17" viewBox="0 0 18 17"><rect x="1" y="1" width="12" height="10" fill="#C8D8F0" stroke="#5070A0"/><rect x="3" y="3" width="8" height="6" fill="#6890D0"/><rect x="9" y="6" width="8" height="10" fill="#E8E8F0" stroke="#606880"/><path d="M11 9h4M11 11h4M11 13h4" stroke="#805060"/></svg>
<div class="a" style="left:205.5px;top:842px;width:127px;height:15px;color:#fff;font-family:'Liberation Serif',serif;font-size:12px;line-height:15px;white-space:nowrap;overflow:hidden;letter-spacing:-0.15px;text-shadow:0.4px 0 0 #fff">coffeenet</div>
<div class="a" style="left:336px;top:837px;width:158px;height:25px;background:linear-gradient(#5A9CF0 0%,#3C80F0 12%,#3A7CEC 50%,#3272E4 90%,#2A62CC 100%);box-shadow:inset 1px 1px 0 #6AA8F8,inset -1px -1px 0 #2450B0;border-radius:3px"></div>
<svg class="a" style="left:345px;top:841px" width="17" height="17" viewBox="0 0 17 17"><circle cx="8.500" cy="8.500" r="7.500" fill="#E8C020"/><path d="M8.500 8.500L1.500 5A7.500 7.500 0 0 1 15.300 5.500Z" fill="#E03020"/><path d="M8.500 8.500L1.700 5A7.500 7.500 0 0 0 7 15.800Z" fill="#30A040"/><circle cx="8.500" cy="8.500" r="3.300" fill="#fff"/><circle cx="8.500" cy="8.500" r="2.500" fill="#4080E8"/></svg>
<div class="a" style="left:365.5px;top:842px;width:127px;height:15px;color:#fff;font-family:'Liberation Serif',serif;font-size:12px;line-height:15px;white-space:nowrap;overflow:hidden;letter-spacing:-0.15px;text-shadow:0.4px 0 0 #fff"><span style="display:inline-block;width:15px;text-align:center">·</span>Afficher le sujet - P...</div>
<div class="a" style="left:495px;top:837px;width:158px;height:25px;background:linear-gradient(#5A9CF0 0%,#3C80F0 12%,#3A7CEC 50%,#3272E4 90%,#2A62CC 100%);box-shadow:inset 1px 1px 0 #6AA8F8,inset -1px -1px 0 #2450B0;border-radius:3px"></div>
<svg class="a" style="left:504px;top:841px" width="17" height="17" viewBox="0 0 17 17"><rect x="0.500" y="0.500" width="16" height="16" fill="#fff" stroke="#aaa"/><path d="M8.500 2l1.500 4 4-2-2 4 4 1.500-4 1 2 4-4-2-1.500 3.500-1-3.500-4 2 2-4-4-1.500 4-1-2-4 4 2z" fill="#E01010"/></svg>
<div class="a" style="left:524.5px;top:842px;width:127px;height:15px;color:#fff;font-family:'Liberation Serif',serif;font-size:12px;line-height:15px;white-space:nowrap;overflow:hidden;letter-spacing:-0.15px;text-shadow:0.4px 0 0 #fff">website domivirtuel.jp...</div>
<div class="a" style="left:656px;top:837px;width:158px;height:25px;background:linear-gradient(#5A9CF0 0%,#3C80F0 12%,#3A7CEC 50%,#3272E4 90%,#2A62CC 100%);box-shadow:inset 1px 1px 0 #6AA8F8,inset -1px -1px 0 #2450B0;border-radius:3px"></div>
<svg class="a" style="left:665px;top:841px" width="18" height="16" viewBox="0 0 18 16"><path d="M1 3h6l1.500 2H17v10H1z" fill="#F8D870" stroke="#B08820"/><path d="M1 7h16" stroke="#FFF0A0"/></svg>
<div class="a" style="left:685.5px;top:842px;width:127px;height:15px;color:#fff;font-family:'Liberation Serif',serif;font-size:12px;line-height:15px;white-space:nowrap;overflow:hidden;letter-spacing:-0.15px;text-shadow:0.4px 0 0 #fff">20130314</div>
<div class="a" style="left:815px;top:837px;width:159px;height:25px;background:linear-gradient(#1C4AA8 0%,#1E52B8 20%,#2258C0 100%);box-shadow:inset 1px 1px 1px #12367E;border-radius:3px"></div>
<svg class="a" style="left:824px;top:841px" width="18" height="18" viewBox="0 0 18 18"><path d="M2.500 16.500C1 11 3 5 8 2.500C11 1 14 0.500 16.500 1.500C17 5 16 9 13 12.500C10 15.500 6 16.500 2.500 16.500Z" fill="#1FA01F"/><g stroke="#0C6C0C" stroke-width="0.900" fill="none"><path d="M4 13.500L2.500 8M6 11.500L5 5M8.500 9L8 3M11 6.500L11.500 1.500M4.500 14L9.500 15.500M7 11.500L13 12.500M9.500 9L15.500 9M12 6.500L16.500 5"/></g><path d="M0.800 17.200L14.500 3.500" stroke="#7CF040" stroke-width="1.300" stroke-linecap="round"/></svg>
<div class="a" style="left:844.5px;top:842px;width:128px;height:15px;color:#fff;font-family:'Liberation Serif',serif;font-size:12px;line-height:15px;white-space:nowrap;overflow:hidden;letter-spacing:-0.15px;text-shadow:0.4px 0 0 #fff">Metasequoia</div>
<div class="a" style="left:1033px;top:834px;width:119px;height:30px;background:linear-gradient(#0C6ED8 0%,#1CA0F4 8%,#1696F0 20%,#128CEC 60%,#0F80E0 90%,#0A66C0 100%);box-shadow:inset 1px 0 0 #0A3C9C,inset 2px 0 0 #30A8F8"></div>
<svg class="a" style="left:1006px;top:842px" width="16" height="15" viewBox="0 0 16 15"><path d="M3 2q2-2 3 0t3 0 3 0" stroke="#000" fill="none"/><rect x="1" y="4" width="14" height="10" fill="#fff" stroke="#000"/><path d="M3 7h10M3 9.500h10M3 12h10" stroke="#000" stroke-dasharray="1.500 1"/></svg>
<svg class="a" style="left:1024px;top:839px" width="20" height="20" viewBox="0 0 20 20"><circle cx="10" cy="10" r="8.500" fill="#2C80F0" stroke="#A8D0FF" stroke-width="1"/><path d="M12 5.500L7.500 10L12 14.500" stroke="#fff" stroke-width="2.200" fill="none"/></svg>
<svg class="a" style="left:1044px;top:841px" width="16" height="17" viewBox="0 0 16 17"><rect x="6" y="1" width="9" height="8" fill="#404888" stroke="#A0A8D0"/><rect x="1" y="5" width="9" height="8" fill="#383878" stroke="#B0B8E0"/><path d="M3 15h6M9 11h5" stroke="#C8C0E0" stroke-width="2"/></svg>
<svg class="a" style="left:1062px;top:841px" width="17" height="17" viewBox="0 0 17 17"><circle cx="6.500" cy="6.500" r="5" fill="#505050" stroke="#c0c0c0"/><circle cx="5.500" cy="5.500" r="1.500" fill="#d0d0d0"/><circle cx="11.500" cy="11.500" r="4.500" fill="#E02010" stroke="#fff" stroke-width="0.800"/><rect x="8.500" y="10.500" width="6" height="2" fill="#fff"/></svg>
<svg class="a" style="left:1086px;top:842px" width="24" height="15" viewBox="0 0 24 15"><g stroke="#fff" stroke-width="1.200" fill="none"><path d="M1 2H11M6 2V14M6.500 6L9.500 9"/><path d="M15.500 1L13.500 5M14.500 4H22.500M13 8.500H23.500M18.500 4V14"/></g></svg>
<div class="a" style="left:1111px;top:842px;width:40px;height:15px;color:#fff;font-family:'Liberation Sans',sans-serif;font-size:12px;line-height:15px;letter-spacing:-0.2px">11:07</div>
</body></html>
